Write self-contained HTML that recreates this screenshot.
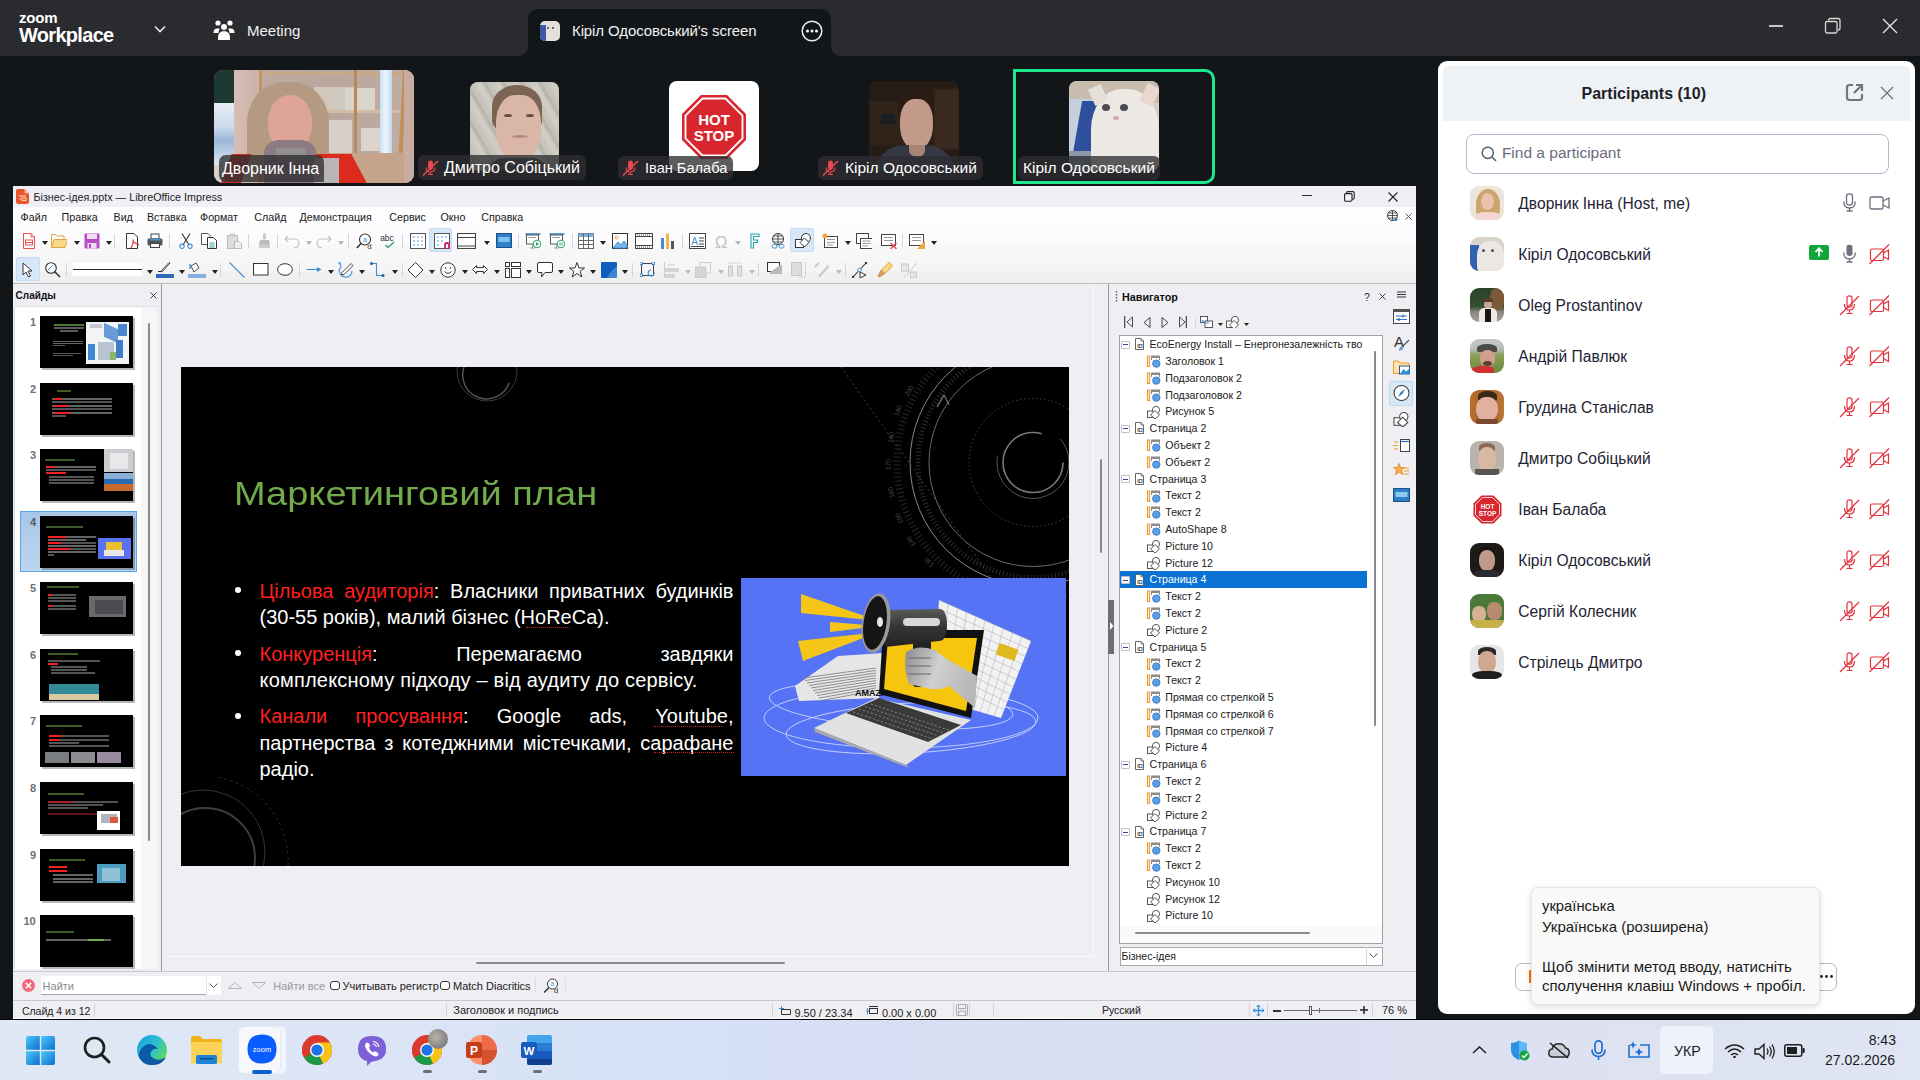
<!DOCTYPE html>
<html><head><meta charset="utf-8">
<style>
*{box-sizing:border-box;margin:0;padding:0}
html,body{width:1920px;height:1080px;overflow:hidden;background:#131619;font-family:"Liberation Sans",sans-serif;position:relative}
.a{position:absolute}
.t{position:absolute;white-space:nowrap;line-height:1}
/* zoom top bar */
#topbar{left:0;top:0;width:1920px;height:56px;background:#2a2b2e}
#tab{left:528px;top:9px;width:303px;height:47px;background:#131619;border-radius:10px 10px 0 0}
.lbl{position:absolute;height:25px;background:rgba(46,46,50,.78);border-radius:6px;color:#fff;font-size:16px;line-height:25px;white-space:nowrap}
/* LO */
#lo{left:13px;top:186px;width:1403px;height:833px;background:#f0eff3}
#pp{left:1438px;top:62px;width:476px;height:952px;background:#fff;border-radius:10px}
#taskbar{left:0;top:1020px;width:1920px;height:60px;background:linear-gradient(90deg,#dce5f4,#dde3f2 50%,#dae1f1)}

#lotitle{left:13px;top:186px;width:1403px;height:21px;background:#f0eff5}
#lomenu{left:13px;top:207px;width:1403px;height:77px;background:linear-gradient(180deg,#fefdff 0,#fbfbfd 45%,#f8f8f9 52%,#f5f5f6 82%,#f0f0f1 86%,#f0f0f1 100%)}

.jl{display:flex;justify-content:space-between;white-space:nowrap;line-height:1;color:#fff}
.sl{position:absolute;white-space:nowrap;line-height:1;color:#fff}
</style></head><body>
<div class="a" style="left:0;top:0;width:1920px;height:30px;background:#2a2b2e"></div>
<div id="tab" class="a"></div>
<div class="a" style="left:0;top:0;width:528px;height:56px;background:#2a2b2e;border-bottom-right-radius:10px"></div>
<div class="a" style="left:831px;top:0;width:1089px;height:56px;background:#2a2b2e;border-bottom-left-radius:10px"></div>
<div class="t" style="left:19px;top:10px;font-size:15px;font-weight:bold;color:#fff;letter-spacing:-0.2px">zoom</div>
<div class="t" style="left:19px;top:25px;font-size:20px;font-weight:bold;color:#fff;letter-spacing:-0.7px">Workplace</div>
<svg class="a" style="left:154px;top:25px" width="12" height="9" viewBox="0 0 12 9"><path d="M1 1.5 L6 6.5 L11 1.5" stroke="#e6e6e6" stroke-width="1.6" fill="none"/></svg>
<svg class="a" style="left:213px;top:19px" width="22" height="22" viewBox="0 0 22 22"><circle cx="5" cy="4" r="2.6" fill="#fff"/><circle cx="17" cy="4" r="2.6" fill="#fff"/><circle cx="11" cy="8" r="3" fill="#fff"/><path d="M0.5 14 Q0.5 9.5 4 9.5 L7 9.5 Q5.5 11 5.5 14 Z" fill="#fff"/><path d="M21.5 14 Q21.5 9.5 18 9.5 L15 9.5 Q16.5 11 16.5 14 Z" fill="#fff"/><path d="M5 21 Q4 12.5 11 12 Q18 12.5 17 21 Z" fill="#fff"/></svg>
<div class="t" style="left:247px;top:23px;font-size:15px;color:#f2f2f2">Meeting</div>
<div class="a" style="left:540px;top:21px;width:20px;height:20px;border-radius:5px;overflow:hidden;background:#e4e0dc"><div class="a" style="left:0;top:4px;width:6px;height:16px;background:#3a5aa8"></div><div class="a" style="left:7px;top:6px;width:2px;height:2px;background:#444;border-radius:50%"></div><div class="a" style="left:12px;top:6px;width:2px;height:2px;background:#444;border-radius:50%"></div></div>
<div class="t" style="left:572px;top:23px;font-size:15px;color:#f2f2f2;letter-spacing:-0.1px">Кіріл Одосовський's screen</div>
<svg class="a" style="left:801px;top:20px" width="22" height="22" viewBox="0 0 22 22"><circle cx="11" cy="11" r="9.8" stroke="#eee" stroke-width="1.5" fill="none"/><circle cx="6.5" cy="11" r="1.5" fill="#fff"/><circle cx="11" cy="11" r="1.5" fill="#fff"/><circle cx="15.5" cy="11" r="1.5" fill="#fff"/></svg>
<div class="a" style="left:1769px;top:25px;width:14px;height:1.5px;background:#c8c8c8"></div>
<svg class="a" style="left:1824px;top:17px" width="18" height="18" viewBox="0 0 18 18"><rect x="1.5" y="4.5" width="11.5" height="11.5" rx="1.5" stroke="#d8d8d8" stroke-width="1.3" fill="none"/><path d="M4.5 3.5 Q4.5 1.5 6.5 1.5 L14 1.5 Q16 1.5 16 3.5 L16 11 Q16 13 14 13" stroke="#d8d8d8" stroke-width="1.3" fill="none"/></svg>
<svg class="a" style="left:1882px;top:18px" width="16" height="16" viewBox="0 0 16 16"><path d="M1 1 L15 15 M15 1 L1 15" stroke="#e8e8e8" stroke-width="1.3"/></svg>

<!-- thumb1 -->
<div class="a" style="left:214px;top:70px;width:200px;height:113px;border-radius:9px;overflow:hidden;background:#c2aca2">
 <div class="a" style="left:0;top:0;width:22px;height:34px;background:#1c3a32"></div>
 <div class="a" style="left:0;top:33px;width:21px;height:62px;background:linear-gradient(180deg,#e8eef6,#c8d8ea 40%,#9ab8d8 60%,#dde6f0)"></div>
 <div class="a" style="left:0;top:95px;width:21px;height:18px;background:#d8d0cc"></div>
 <div class="a" style="left:20px;top:0;width:27px;height:113px;background:linear-gradient(90deg,#d6beb6,#cdb0a6)"></div>
 <div class="a" style="left:45px;top:0;width:3px;height:113px;background:#c49462"></div>
 <div class="a" style="left:48px;top:0;width:140px;height:83px;background:linear-gradient(90deg,#bfaaa2,#b9a69e 50%,#c0aca0)"></div>
 <div class="a" style="left:48px;top:2px;width:140px;height:3px;background:#c8a888"></div>
 <div class="a" style="left:48px;top:40px;width:140px;height:3px;background:#d4bca4"></div>
 <div class="a" style="left:100px;top:17px;width:40px;height:23px;background:#d0c8bc"></div>
 <div class="a" style="left:131px;top:18px;width:30px;height:22px;background:#d8d6cc"></div>
 <div class="a" style="left:112px;top:50px;width:26px;height:33px;background:#d8d0c8"></div>
 <div class="a" style="left:147px;top:58px;width:30px;height:23px;background:#dcd4cc"></div>
 <div class="a" style="left:166px;top:0;width:12px;height:83px;background:linear-gradient(90deg,#c8e0f4,#eef6fc,#c0d8f0)"></div>
 <div class="a" style="left:140px;top:0;width:3px;height:113px;background:#b8885a"></div>
 <div class="a" style="left:186px;top:0;width:4px;height:113px;background:#c0905c;transform:skewX(-3deg)"></div>
 <div class="a" style="left:48px;top:83px;width:152px;height:30px;background:#c6a48a"></div>
 <div class="a" style="left:190px;top:0;width:10px;height:113px;background:#c8aca0"></div>
 <div class="a" style="left:33px;top:12px;width:82px;height:90px;border-radius:45% 45% 20% 20%;background:#b49a80"></div>
 <div class="a" style="left:54px;top:25px;width:44px;height:56px;border-radius:48% 48% 45% 45%;background:#dea596"></div>
 <div class="a" style="left:50px;top:70px;width:52px;height:43px;border-radius:30% 30% 0 0;background:#8c7a84"></div>
 <div class="a" style="left:62px;top:78px;width:30px;height:10px;background:#909090"></div>
 <div class="a" style="left:112px;top:84px;width:36px;height:40px;background:#dc2a1c;transform:skewX(28deg)"></div>
 <div class="a" style="left:12px;top:84px;width:20px;height:30px;background:#c83020;transform:skewX(-20deg)"></div>
 <div class="a" style="left:100px;top:88px;width:25px;height:25px;background:#b8b4b8"></div>
</div>
<div class="lbl" style="left:219px;top:155px;width:105px;height:27px;border-radius:7px 7px 0 7px;line-height:27px;padding-left:3px">Дворник Інна</div>
<!-- thumb2 -->
<div class="a" style="left:470px;top:82px;width:89px;height:89px;border-radius:8px;overflow:hidden;background:#c4c0b8">
 <div class="a" style="left:0;top:0;width:89px;height:89px;background:repeating-linear-gradient(60deg,#d4d0c8 0 7px,#b0aca4 7px 10px,#c8c4bc 10px 16px);opacity:.8;filter:blur(1px)"></div>
 <div class="a" style="left:22px;top:3px;width:50px;height:45px;border-radius:48% 48% 20% 20%;background:#7c6452;filter:blur(.6px)"></div>
 <div class="a" style="left:26px;top:13px;width:45px;height:66px;border-radius:42% 42% 46% 46%;background:#d9b6a6;filter:blur(.5px)"></div>
 <div class="a" style="left:34px;top:32px;width:8px;height:3px;border-radius:50%;background:#6a4a40"></div>
 <div class="a" style="left:56px;top:32px;width:8px;height:3px;border-radius:50%;background:#6a4a40"></div>
 <div class="a" style="left:42px;top:53px;width:16px;height:3px;border-radius:50%;background:#b88a80"></div>
 <div class="a" style="left:18px;top:76px;width:60px;height:16px;border-radius:20px 20px 0 0;background:#44403e"></div>
</div>
<div class="lbl" style="left:418px;top:155px;width:168px;padding-left:26px">Дмитро Собіцький</div>
<svg class="a" style="left:422px;top:160px" width="17" height="16" viewBox="0 0 17 16"><path d="M6 2.5 Q6 0.5 8.5 0.5 Q11 0.5 11 2.5 L11 8 Q11 10 8.5 10 Q6 10 6 8 Z" fill="#e5484d"/><path d="M4 7.5 Q4 12 8.5 12 Q13 12 13 7.5 M8.5 12 L8.5 14.5 M6 14.5 L11 14.5" stroke="#e5484d" stroke-width="1.2" fill="none"/><path d="M1 15.5 L16 1" stroke="#e5484d" stroke-width="1.6"/></svg>
<!-- thumb3 -->
<div class="a" style="left:669px;top:81px;width:90px;height:90px;border-radius:8px;background:#fff"></div>
<svg class="a" style="left:681px;top:94px" width="66" height="66" viewBox="0 0 66 66"><polygon points="20,1 46,1 65,20 65,46 46,65 20,65 1,46 1,20" fill="#d8262f"/><polygon points="21.5,4.5 44.5,4.5 61.5,21.5 61.5,44.5 44.5,61.5 21.5,61.5 4.5,44.5 4.5,21.5" fill="none" stroke="#fff" stroke-width="1.8"/><text x="33" y="31" text-anchor="middle" font-family="Liberation Sans" font-weight="bold" font-size="15" fill="#fff">HOT</text><text x="33" y="47" text-anchor="middle" font-family="Liberation Sans" font-weight="bold" font-size="15" fill="#fff">STOP</text></svg>
<div class="lbl" style="left:618px;top:156px;width:115px;height:24px;line-height:24px;padding-left:27px;font-size:14.6px">Іван Балаба</div>
<svg class="a" style="left:622px;top:160px" width="17" height="16" viewBox="0 0 17 16"><path d="M6 2.5 Q6 0.5 8.5 0.5 Q11 0.5 11 2.5 L11 8 Q11 10 8.5 10 Q6 10 6 8 Z" fill="#e5484d"/><path d="M4 7.5 Q4 12 8.5 12 Q13 12 13 7.5 M8.5 12 L8.5 14.5 M6 14.5 L11 14.5" stroke="#e5484d" stroke-width="1.2" fill="none"/><path d="M1 15.5 L16 1" stroke="#e5484d" stroke-width="1.6"/></svg>
<!-- thumb4 -->
<div class="a" style="left:869px;top:81px;width:90px;height:90px;border-radius:8px;overflow:hidden;background:#261c16">
 <div class="a" style="left:0;top:20px;width:35px;height:45px;background:#30241a;filter:blur(1px)"></div>
 <div class="a" style="left:65px;top:8px;width:25px;height:60px;background:#3a2a20;filter:blur(1px)"></div>
 <div class="a" style="left:12px;top:33px;width:14px;height:10px;background:#1a1e20"></div>
 <div class="a" style="left:29px;top:8px;width:36px;height:28px;border-radius:50% 50% 10% 10%;background:#2a1c14"></div>
 <div class="a" style="left:31px;top:18px;width:33px;height:51px;border-radius:42% 42% 48% 48%;background:#c29a8a;filter:blur(.6px)"></div>
 <div class="a" style="left:5px;top:64px;width:82px;height:30px;border-radius:30px 30px 0 0;background:#343844"></div>
 <div class="a" style="left:40px;top:64px;width:16px;height:12px;border-radius:0 0 50% 50%;background:#a88476"></div>
</div>
<div class="lbl" style="left:818px;top:156px;width:165px;height:24px;line-height:24px;padding-left:27px;font-size:15.5px">Кіріл Одосовський</div>
<svg class="a" style="left:822px;top:160px" width="17" height="16" viewBox="0 0 17 16"><path d="M6 2.5 Q6 0.5 8.5 0.5 Q11 0.5 11 2.5 L11 8 Q11 10 8.5 10 Q6 10 6 8 Z" fill="#e5484d"/><path d="M4 7.5 Q4 12 8.5 12 Q13 12 13 7.5 M8.5 12 L8.5 14.5 M6 14.5 L11 14.5" stroke="#e5484d" stroke-width="1.2" fill="none"/><path d="M1 15.5 L16 1" stroke="#e5484d" stroke-width="1.6"/></svg>
<!-- thumb5 -->
<div class="a" style="left:1013px;top:69px;width:202px;height:115px;border:3px solid #1fe88c;border-radius:0 10px 10px 0"></div>
<div class="a" style="left:1069px;top:81px;width:90px;height:90px;border-radius:8px;overflow:hidden;background:#d8d0c6">
 <div class="a" style="left:0;top:0;width:90px;height:22px;background:#c8bcae"></div>
 <div class="a" style="left:0;top:18px;width:30px;height:72px;background:#c4d0dc"></div>
 <div class="a" style="left:8px;top:20px;width:22px;height:58px;background:#2d4f9c;transform:skewX(-10deg)"></div>
 <div class="a" style="left:0;top:70px;width:30px;height:20px;background:#8a9aaa"></div>
 <div class="a" style="left:22px;top:8px;width:68px;height:90px;border-radius:45% 45% 20% 20%;background:#ece8e4;filter:blur(.6px)"></div>
 <div class="a" style="left:22px;top:5px;width:14px;height:18px;background:#e6e0da;transform:rotate(-25deg)"></div>
 <div class="a" style="left:74px;top:4px;width:14px;height:20px;background:#e8d8d0;transform:rotate(25deg)"></div>
 <div class="a" style="left:33px;top:23px;width:8px;height:7px;border-radius:50%;background:#4a4a50"></div>
 <div class="a" style="left:51px;top:23px;width:8px;height:7px;border-radius:50%;background:#4a4a50"></div>
 <div class="a" style="left:44px;top:35px;width:6px;height:4px;border-radius:50%;background:#d8a8a8"></div>
</div>
<div class="lbl" style="left:1018px;top:156px;width:142px;height:24px;line-height:24px;padding-left:5px;font-size:15.5px">Кіріл Одосовський</div>
<div class="a" style="left:13px;top:186px;width:1403px;height:833px;background:#efeef2;"></div>
<div class="a" style="left:13px;top:1018px;width:1403px;height:1px;background:#fdfdfd;"></div>
<div id="lotitle" class="a"></div><div id="lomenu" class="a"></div>
<svg class="a" style="left:16px;top:189px;" width="13" height="15" viewBox="0 0 13 15"><path d="M1.5 0 L8.5 0 L13 4.5 L13 13 Q13 15 11 15 L2 15 Q0 15 0 13 L0 1.5 Q0 0 1.5 0 Z" fill="#e9542a"/><path d="M8.5 0 L8.5 4.5 L13 4.5" fill="#f8b8a0"/><path d="M3 7 L10 7 M3.5 10 L5 10" stroke="#fde7c0" stroke-width="1.2"/><rect x="6" y="9" width="4" height="2.5" fill="none" stroke="#fde7c0" stroke-width=".9"/></svg>
<div class="t" style="left:33.50px;top:191.70px;font-size:10.75px;color:#222;">Бізнес-ідея.pptx — LibreOffice Impress</div>
<div class="a" style="left:1302px;top:195px;width:10px;height:1px;background:#333;"></div>
<svg class="a" style="left:1344px;top:191px;" width="11" height="11" viewBox="0 0 11 11"><rect x="0.6" y="2.6" width="7.4" height="7.6" rx="1.2" fill="none" stroke="#222" stroke-width="1.1"/><path d="M2.6 2.6 L2.6 1.8 Q2.6 0.6 3.8 0.6 L9 0.6 Q10.2 0.6 10.2 1.8 L10.2 7 Q10.2 8.2 9 8.2 L8 8.2" fill="none" stroke="#222" stroke-width="1.1"/></svg>
<svg class="a" style="left:1388px;top:192px;" width="10" height="10" viewBox="0 0 10 10"><path d="M0.5 0.5 L9.5 9.5 M9.5 0.5 L0.5 9.5" stroke="#222" stroke-width="1.1"/></svg>
<div class="t" style="left:20.60px;top:211.94px;font-size:10.7px;color:#1a1a1a;">Файл</div>
<div class="t" style="left:61.60px;top:211.94px;font-size:10.7px;color:#1a1a1a;">Правка</div>
<div class="t" style="left:113.50px;top:211.94px;font-size:10.7px;color:#1a1a1a;">Вид</div>
<div class="t" style="left:146.90px;top:211.94px;font-size:10.7px;color:#1a1a1a;">Вставка</div>
<div class="t" style="left:200.00px;top:211.94px;font-size:10.7px;color:#1a1a1a;">Формат</div>
<div class="t" style="left:254.30px;top:211.94px;font-size:10.7px;color:#1a1a1a;">Слайд</div>
<div class="t" style="left:299.50px;top:211.94px;font-size:10.7px;color:#1a1a1a;">Демонстрация</div>
<div class="t" style="left:389.30px;top:211.94px;font-size:10.7px;color:#1a1a1a;">Сервис</div>
<div class="t" style="left:440.50px;top:211.94px;font-size:10.7px;color:#1a1a1a;">Окно</div>
<div class="t" style="left:481.30px;top:211.94px;font-size:10.7px;color:#1a1a1a;">Справка</div>
<svg class="a" style="left:1387px;top:210px;" width="12" height="12" viewBox="0 0 12 12"><circle cx="5.5" cy="5.5" r="5" fill="none" stroke="#333"/><path d="M0.5 5.5 L10.5 5.5 M5.5 0.5 L5.5 10.5 M1.5 3 L9.5 3 M1.5 8 L9.5 8" stroke="#333" stroke-width=".8"/><path d="M9 7 L9 11 M7.5 9.5 L9 11 L10.5 9.5" stroke="#2d8fd6"/></svg>
<svg class="a" style="left:1405px;top:213px;" width="7" height="7" viewBox="0 0 7 7"><path d="M0.5 0.5 L6.5 6.5 M6.5 0.5 L0.5 6.5" stroke="#555"/></svg>
<div class="a" style="left:429px;top:228px;width:23px;height:24px;background:#d6e7f8;border:1px solid #c7dcf2;border-radius:2px"></div>
<div class="a" style="left:790px;top:228px;width:24px;height:24px;background:#d6e7f8;border:1px solid #c7dcf2;border-radius:2px"></div>
<svg class="a" style="left:21px;top:233px;" width="16" height="16" viewBox="0 0 16 16"><path d="M2.5 0.5 L10 0.5 L13.5 4 L13.5 15.5 L2.5 15.5 Z" fill="#fff" stroke="#e8504a"/><path d="M10 0.5 L10 4 L13.5 4" fill="none" stroke="#e8504a"/><rect x="4.5" y="7" width="7" height="5" fill="none" stroke="#e8504a"/><path d="M4 9.5 L12 9.5" stroke="#e8504a"/></svg>
<svg class="a" style="left:51px;top:233px;" width="16" height="16" viewBox="0 0 16 16"><path d="M0.5 3 L0.5 14.5 L14 14.5 L16.5 6.5 L3 6.5 L0.5 14" fill="#f8d889" stroke="#e3a53a"/><path d="M0.5 3 L0.5 1.5 L5 1.5 L6.5 3 L13 3 L13 6.5" fill="none" stroke="#e3a53a"/></svg>
<svg class="a" style="left:84px;top:233px;" width="16" height="16" viewBox="0 0 16 16"><rect x="0.5" y="0.5" width="15" height="15" rx="1" fill="#b84fc0"/><rect x="3" y="1" width="10" height="5" fill="#f4dcf6"/><rect x="3.5" y="10" width="9" height="5.5" fill="#f4dcf6"/><rect x="5" y="11" width="2" height="4" fill="#b84fc0"/></svg>
<svg class="a" style="left:125px;top:233px;" width="16" height="16" viewBox="0 0 16 16"><path d="M1.5 0.5 L9 0.5 L12.5 4 L12.5 15.5 L1.5 15.5 Z" fill="#fff" stroke="#333"/><path d="M6 15 Q9 9 8 7 Q7 9 14 12" fill="none" stroke="#e0393e" stroke-width="1.2"/></svg>
<svg class="a" style="left:147px;top:233px;" width="16" height="16" viewBox="0 0 16 16"><rect x="4" y="1" width="8" height="5" fill="#fff" stroke="#444"/><rect x="0.5" y="5.5" width="15" height="7" rx="1.5" fill="#555"/><rect x="3" y="6" width="10" height="1.5" fill="#3d9ad6"/><rect x="3.5" y="10.5" width="9" height="4" fill="#fff" stroke="#444"/></svg>
<svg class="a" style="left:178px;top:233px;" width="16" height="16" viewBox="0 0 16 16"><path d="M4 0.5 L11 12 M12 0.5 L5 12" stroke="#333" stroke-width="1.1"/><circle cx="4" cy="13.3" r="2.2" fill="none" stroke="#3d8fd6" stroke-width="1.1"/><circle cx="12" cy="13.3" r="2.2" fill="none" stroke="#3d8fd6" stroke-width="1.1"/></svg>
<svg class="a" style="left:201px;top:233px;" width="16" height="16" viewBox="0 0 16 16"><path d="M0.5 0.5 L7 0.5 L9 2.5 L9 11.5 L0.5 11.5 Z" fill="#fff" stroke="#555"/><path d="M6.5 4.5 L12.5 4.5 L15.5 7.5 L15.5 15.5 L6.5 15.5 Z" fill="#fff" stroke="#333"/><path d="M8.5 10 L13.5 10 M8.5 12 L13.5 12 M8.5 14 L13.5 14" stroke="#3aa39a"/></svg>
<svg class="a" style="left:227px;top:233px;" width="16" height="16" viewBox="0 0 16 16"><rect x="0.5" y="2.5" width="10" height="13" fill="#ddd" stroke="#bbb"/><rect x="3" y="0.5" width="5" height="3" fill="#ccc"/><path d="M7.5 8.5 L12 8.5 L14.5 11 L14.5 15.5 L7.5 15.5 Z" fill="#eee" stroke="#bbb"/></svg>
<svg class="a" style="left:257px;top:233px;" width="16" height="16" viewBox="0 0 16 16"><rect x="6" y="0.5" width="3" height="6" fill="#ccc"/><path d="M3 7 L12 7 L13 11 L2 11 Z" fill="#bbb"/><rect x="2" y="11" width="11" height="4" fill="#ccc"/></svg>
<svg class="a" style="left:284px;top:233px;" width="16" height="16" viewBox="0 0 16 16"><path d="M4 3 L1 6 L4 9 M1.5 6 L10 6 Q15 6 15 10.5 Q15 14 10 15" fill="none" stroke="#c2c2c2" stroke-width="1.1"/></svg>
<svg class="a" style="left:316px;top:233px;" width="16" height="16" viewBox="0 0 16 16"><path d="M12 3 L15 6 L12 9 M14.5 6 L6 6 Q1 6 1 10.5 Q1 14 6 15" fill="none" stroke="#c2c2c2" stroke-width="1.1"/></svg>
<svg class="a" style="left:356px;top:233px;" width="16" height="16" viewBox="0 0 16 16"><circle cx="9" cy="6.5" r="5.5" fill="#fff" stroke="#333" stroke-width="1.1"/><path d="M5 10.5 L0.8 15" stroke="#333" stroke-width="1.6"/><text x="9" y="9" font-size="7" text-anchor="middle" fill="#3d8fd6" font-family="Liberation Sans">a</text><text x="13.5" y="15.5" font-size="8" text-anchor="middle" fill="#333" font-family="Liberation Sans">d</text></svg>
<svg class="a" style="left:379px;top:233px;" width="16" height="16" viewBox="0 0 16 16"><text x="8" y="8" font-size="8.5" text-anchor="middle" fill="#333" font-family="Liberation Sans">abc</text><path d="M6.5 12 L9 14.5 L15 9" fill="none" stroke="#29a36a" stroke-width="1.3"/></svg>
<svg class="a" style="left:410px;top:233px;" width="16" height="16" viewBox="0 0 16 16"><rect x="0.5" y="0.5" width="15" height="15" fill="#fff" stroke="#555"/><g fill="#3d8fd6"><circle cx="4" cy="4" r=".8"/><circle cx="8" cy="4" r=".8"/><circle cx="12" cy="4" r=".8"/><circle cx="4" cy="8" r=".8"/><circle cx="8" cy="8" r=".8"/><circle cx="12" cy="8" r=".8"/><circle cx="4" cy="12" r=".8"/><circle cx="8" cy="12" r=".8"/><circle cx="12" cy="12" r=".8"/></g></svg>
<svg class="a" style="left:434px;top:233px;" width="16" height="16" viewBox="0 0 16 16"><rect x="0.5" y="0.5" width="15" height="15" fill="#fff" stroke="#555"/><g fill="#3d8fd6"><circle cx="4" cy="4" r=".8"/><circle cx="8" cy="4" r=".8"/><circle cx="12" cy="4" r=".8"/><circle cx="4" cy="8" r=".8"/><circle cx="8" cy="8" r=".8"/><circle cx="4" cy="12" r=".8"/></g><path d="M11 16 L11 11 Q13 9 15 11 L15 16" fill="none" stroke="#d21d6a" stroke-width="1.8"/></svg>
<svg class="a" style="left:496px;top:233px;" width="16" height="16" viewBox="0 0 16 16"><rect x="0.5" y="0.5" width="15" height="14" fill="#2f7fc8" stroke="#1b4f8a"/><rect x="2.5" y="4" width="11" height="5" fill="#7fc4f0"/></svg>
<svg class="a" style="left:525px;top:233px;" width="16" height="16" viewBox="0 0 16 16"><path d="M0.5 1 L15.5 1" stroke="#2e80c6" stroke-width="1.5"/><rect x="1.5" y="2" width="12" height="9" fill="#fff" stroke="#555"/><path d="M3.5 4.5 L11 4.5" stroke="#999"/><path d="M7.5 11 L7.5 15 M5 15 L10 15" stroke="#999"/><circle cx="12" cy="11" r="3.8" fill="#fff" stroke="#2aa36a"/><path d="M11 9 L14 11 L11 13 Z" fill="#2aa36a"/></svg>
<svg class="a" style="left:549px;top:233px;" width="16" height="16" viewBox="0 0 16 16"><path d="M0.5 1 L15.5 1" stroke="#2e80c6" stroke-width="1.5"/><rect x="1.5" y="2" width="12" height="9" fill="#fff" stroke="#555"/><path d="M3.5 4.5 L11 4.5" stroke="#999"/><path d="M7.5 11 L7.5 15 M5 15 L10 15" stroke="#999"/><circle cx="12" cy="11" r="3.8" fill="#fff" stroke="#2aa36a"/><path d="M11 9.5 L11 12.5 M13 9.5 L13 12.5" stroke="#2aa36a"/></svg>
<svg class="a" style="left:578px;top:233px;" width="16" height="16" viewBox="0 0 16 16"><rect x="0.5" y="0.5" width="15" height="15" fill="#fff" stroke="#666"/><rect x="0.5" y="0.5" width="15" height="3.5" fill="#7ab0de"/><path d="M0.5 7.5 L15.5 7.5 M0.5 11.5 L15.5 11.5 M5.5 0.5 L5.5 15.5 M10.5 0.5 L10.5 15.5" stroke="#666"/></svg>
<svg class="a" style="left:612px;top:233px;" width="16" height="16" viewBox="0 0 16 16"><rect x="0.5" y="0.5" width="15" height="15" fill="#fff" stroke="#333"/><circle cx="4.5" cy="4.5" r="1.5" fill="none" stroke="#f29a38"/><path d="M1 15 L6 9 L9 12 L12 8 L15 12 L15 15 Z" fill="#7ab6e8" stroke="#3d8fd6"/></svg>
<svg class="a" style="left:660px;top:233px;" width="16" height="16" viewBox="0 0 16 16"><rect x="1" y="5" width="3" height="11" fill="#3d8fd6"/><rect x="6" y="0.5" width="3" height="15.5" fill="#f6b54c"/><rect x="11" y="8" width="3" height="8" fill="#555"/></svg>
<svg class="a" style="left:713px;top:233px;" width="16" height="16" viewBox="0 0 16 16"><text x="8" y="14.5" font-size="17" text-anchor="middle" fill="#c2c2c2" font-family="Liberation Sans">&#937;</text></svg>
<svg class="a" style="left:747px;top:233px;" width="16" height="16" viewBox="0 0 16 16"><path d="M4 1 L12 1 L12 3.5 L6.5 3.5 L6.5 7 L10.5 7 L10.5 9.5 L6.5 9.5 L6.5 15 L4 15 Z" fill="#fff" stroke="#27a0b0" stroke-width="1.1"/></svg>
<svg class="a" style="left:770px;top:233px;" width="16" height="16" viewBox="0 0 16 16"><circle cx="8" cy="6" r="5.5" fill="#fff" stroke="#333"/><path d="M2.5 6 L13.5 6 M8 0.5 L8 11.5 M3.5 3 L12.5 3 M3.5 9 L12.5 9" stroke="#333" stroke-width=".8"/><rect x="2" y="11.5" width="5" height="3.5" rx="1.5" fill="none" stroke="#3d8fd6"/><rect x="9" y="11.5" width="5" height="3.5" rx="1.5" fill="none" stroke="#3d8fd6"/></svg>
<svg class="a" style="left:795px;top:233px;" width="16" height="16" viewBox="0 0 16 16"><rect x="0.5" y="6.5" width="8" height="8" fill="#fff" stroke="#333"/><circle cx="11" cy="5" r="4.5" fill="#fff" stroke="#333"/><path d="M9.5 5 L14 9.5 L9.5 14 L5 9.5 Z" fill="#fff" stroke="#333"/></svg>
<svg class="a" style="left:822px;top:233px;" width="16" height="16" viewBox="0 0 16 16"><rect x="2.5" y="3.5" width="13" height="11" fill="#fff" stroke="#444"/><path d="M5 6.5 L13 6.5 M5 9.5 L13 9.5 M5 12 L11 12" stroke="#999"/><circle cx="3" cy="3" r="2.5" fill="#f6a33a"/></svg>
<svg class="a" style="left:856px;top:233px;" width="16" height="16" viewBox="0 0 16 16"><rect x="0.5" y="0.5" width="12" height="10" fill="#fff" stroke="#444"/><rect x="4.5" y="5.5" width="12" height="10" fill="#fff" stroke="#444"/><path d="M6.5 8 L14.5 8 M6.5 10.5 L14.5 10.5 M6.5 13 L12 13" stroke="#999"/></svg>
<svg class="a" style="left:881px;top:233px;" width="16" height="16" viewBox="0 0 16 16"><rect x="0.5" y="1.5" width="14" height="11" fill="#fff" stroke="#444"/><path d="M3 4.5 L12 4.5 M3 7.5 L12 7.5" stroke="#999"/><path d="M9.5 10 L15.5 16 M15.5 10 L9.5 16" stroke="#e23b4a" stroke-width="1.2"/></svg>
<svg class="a" style="left:909px;top:233px;" width="16" height="16" viewBox="0 0 16 16"><rect x="0.5" y="1.5" width="14" height="11" fill="#fff" stroke="#444"/><path d="M3 4.5 L12 4.5 M3 7.5 L12 7.5" stroke="#999"/><path d="M16 8 L16 16 L8 16 Z" fill="#f6a33a"/></svg>
<svg class="a" style="left:457px;top:233px;" width="19" height="16" viewBox="0 0 19 16"><rect x="0.5" y="0.5" width="18" height="15" fill="#fff" stroke="#444" stroke-width="1.1"/><path d="M0.5 4.5 L18.5 4.5 M0.5 13 L18.5 13" stroke="#444"/></svg>
<svg class="a" style="left:635px;top:233px;" width="18" height="16" viewBox="0 0 18 16"><rect x="0.5" y="0.5" width="17" height="15" fill="#fff" stroke="#444"/><path d="M0.5 3.5 L17.5 3.5 M0.5 12.5 L17.5 12.5" stroke="#444"/><path d="M2 2 L16 2 M2 14 L16 14" stroke="#444" stroke-dasharray="1 1"/></svg>
<svg class="a" style="left:689px;top:233px;" width="17" height="16" viewBox="0 0 17 16"><rect x="0.5" y="0.5" width="16" height="15" fill="#fff" stroke="#444"/><text x="5.5" y="12" font-size="10" text-anchor="middle" fill="#3d8fd6" font-family="Liberation Sans">A</text><path d="M10 5 L15 5 M10 8 L15 8 M10 11 L15 11 M2 13.5 L15 13.5" stroke="#444"/></svg>
<svg class="a" style="left:42px;top:241px;" width="6" height="4" viewBox="0 0 6 4"><path d="M0 0 L6 0 L3 4 Z" fill="#222"/></svg>
<svg class="a" style="left:74px;top:241px;" width="6" height="4" viewBox="0 0 6 4"><path d="M0 0 L6 0 L3 4 Z" fill="#222"/></svg>
<svg class="a" style="left:106px;top:241px;" width="6" height="4" viewBox="0 0 6 4"><path d="M0 0 L6 0 L3 4 Z" fill="#222"/></svg>
<svg class="a" style="left:484px;top:241px;" width="6" height="4" viewBox="0 0 6 4"><path d="M0 0 L6 0 L3 4 Z" fill="#222"/></svg>
<svg class="a" style="left:600px;top:241px;" width="6" height="4" viewBox="0 0 6 4"><path d="M0 0 L6 0 L3 4 Z" fill="#222"/></svg>
<svg class="a" style="left:845px;top:241px;" width="6" height="4" viewBox="0 0 6 4"><path d="M0 0 L6 0 L3 4 Z" fill="#222"/></svg>
<svg class="a" style="left:931px;top:241px;" width="6" height="4" viewBox="0 0 6 4"><path d="M0 0 L6 0 L3 4 Z" fill="#222"/></svg>
<svg class="a" style="left:306px;top:241px;" width="6" height="4" viewBox="0 0 6 4"><path d="M0 0 L6 0 L3 4 Z" fill="#b8b8b8"/></svg>
<svg class="a" style="left:338px;top:241px;" width="6" height="4" viewBox="0 0 6 4"><path d="M0 0 L6 0 L3 4 Z" fill="#b8b8b8"/></svg>
<svg class="a" style="left:735px;top:241px;" width="6" height="4" viewBox="0 0 6 4"><path d="M0 0 L6 0 L3 4 Z" fill="#b8b8b8"/></svg>
<div class="a" style="left:114px;top:234px;width:1px;height:14px;background:#d6d6da;"></div>
<div class="a" style="left:169px;top:234px;width:1px;height:14px;background:#d6d6da;"></div>
<div class="a" style="left:248px;top:234px;width:1px;height:14px;background:#d6d6da;"></div>
<div class="a" style="left:277px;top:234px;width:1px;height:14px;background:#d6d6da;"></div>
<div class="a" style="left:348px;top:234px;width:1px;height:14px;background:#d6d6da;"></div>
<div class="a" style="left:402px;top:234px;width:1px;height:14px;background:#d6d6da;"></div>
<div class="a" style="left:518px;top:234px;width:1px;height:14px;background:#d6d6da;"></div>
<div class="a" style="left:572px;top:234px;width:1px;height:14px;background:#d6d6da;"></div>
<div class="a" style="left:682px;top:234px;width:1px;height:14px;background:#d6d6da;"></div>
<div class="a" style="left:902px;top:234px;width:1px;height:14px;background:#d6d6da;"></div>
<div class="a" style="left:16px;top:257px;width:24px;height:24px;background:#d6e7f8;border:1px solid #c7dcf2;border-radius:2px"></div>
<svg class="a" style="left:21px;top:262px;" width="16" height="16" viewBox="0 0 16 16"><path d="M2 1 L2 13 L5 10 L7.5 15 L9.5 14 L7 9 L11 9 Z" fill="#fff" stroke="#333"/></svg>
<svg class="a" style="left:45px;top:262px;" width="16" height="16" viewBox="0 0 16 16"><circle cx="6" cy="6" r="5.3" fill="#fff" stroke="#333" stroke-width="1.1"/><path d="M9.5 9.5 L15 15" stroke="#333" stroke-width="1.6"/><path d="M3 8 L8 3" stroke="#3d8fd6"/></svg>
<svg class="a" style="left:156px;top:262px;" width="18" height="16" viewBox="0 0 18 16"><path d="M14 1 L7 9 L5 10 L6 8 L13 0.5 Z" fill="#fff" stroke="#333" stroke-width=".9"/><path d="M2 9.5 L5 9.5" stroke="#333"/><rect x="0" y="12" width="18" height="4" fill="#2f6ab8"/></svg>
<svg class="a" style="left:188px;top:262px;" width="18" height="16" viewBox="0 0 18 16"><path d="M3 4 L8 1 L11 6 L6 10 Z" fill="#fff" stroke="#333" stroke-width=".9"/><path d="M2 2 L2 7" stroke="#3d8fd6" stroke-width="1.3"/><rect x="0" y="12" width="18" height="4" fill="#86aee0"/></svg>
<svg class="a" style="left:229px;top:262px;" width="16" height="16" viewBox="0 0 16 16"><path d="M0.5 0.5 L15.5 15.5" stroke="#3d8fd6" stroke-width="1.1"/></svg>
<svg class="a" style="left:253px;top:262px;" width="16" height="16" viewBox="0 0 16 16"><rect x="0.5" y="1.5" width="14.5" height="11.5" fill="#fff" stroke="#333"/></svg>
<svg class="a" style="left:277px;top:262px;" width="16" height="16" viewBox="0 0 16 16"><ellipse cx="8" cy="7.5" rx="7.4" ry="5.8" fill="#fff" stroke="#333"/></svg>
<svg class="a" style="left:306px;top:262px;" width="16" height="16" viewBox="0 0 16 16"><path d="M0.5 7.5 L13 7.5" stroke="#3d8fd6" stroke-width="1.1"/><path d="M11 5 L15.5 7.5 L11 10 Z" fill="#3d8fd6"/></svg>
<svg class="a" style="left:338px;top:262px;" width="16" height="16" viewBox="0 0 16 16"><path d="M3 1 L1 1 Q5 4 1 8 Q2 16 10 15 Q14 13 14 9" fill="none" stroke="#3d8fd6" stroke-width="1.1"/><path d="M13 1.5 L15 3.5 L6 12.5 L3.5 13 L4 10.5 Z" fill="#fff" stroke="#333" stroke-width=".9"/></svg>
<svg class="a" style="left:370px;top:262px;" width="16" height="16" viewBox="0 0 16 16"><path d="M1.5 1.5 L6.5 1.5 L6.5 13.5 L12.5 13.5" fill="none" stroke="#3d8fd6" stroke-width="1.1"/><circle cx="1.5" cy="1.5" r="1.5" fill="#1b5fa8"/><circle cx="13" cy="13.5" r="1.5" fill="#1b5fa8"/></svg>
<svg class="a" style="left:408px;top:262px;" width="16" height="16" viewBox="0 0 16 16"><path d="M7.5 0.5 L15 8 L7.5 15.5 L0 8 Z" fill="#fff" stroke="#333"/></svg>
<svg class="a" style="left:440px;top:262px;" width="16" height="16" viewBox="0 0 16 16"><circle cx="8" cy="8" r="7.2" fill="#fff" stroke="#333"/><circle cx="5.5" cy="6" r=".8" fill="#333"/><circle cx="10.5" cy="6" r=".8" fill="#333"/><path d="M4.5 9.5 Q8 13 11.5 9.5" fill="none" stroke="#333"/></svg>
<svg class="a" style="left:472px;top:262px;" width="16" height="16" viewBox="0 0 16 16"><path d="M0.5 7.5 L4.5 3.5 L4.5 5.5 L11.5 5.5 L11.5 3.5 L15.5 7.5 L11.5 11.5 L11.5 9.5 L4.5 9.5 L4.5 11.5 Z" fill="#fff" stroke="#333"/></svg>
<svg class="a" style="left:505px;top:262px;" width="16" height="16" viewBox="0 0 16 16"><rect x="0.5" y="0.5" width="4" height="4" fill="#fff" stroke="#333"/><rect x="6.5" y="0.5" width="9" height="4" fill="#fff" stroke="#333"/><rect x="0.5" y="6.5" width="4" height="9" fill="#fff" stroke="#333"/><rect x="6.5" y="6.5" width="9" height="9" fill="#fff" stroke="#333"/></svg>
<svg class="a" style="left:537px;top:262px;" width="16" height="16" viewBox="0 0 16 16"><path d="M2 0.5 L14 0.5 Q15.5 0.5 15.5 2 L15.5 9 Q15.5 10.5 14 10.5 L8 10.5 L4.5 15 L5 10.5 L2 10.5 Q0.5 10.5 0.5 9 L0.5 2 Q0.5 0.5 2 0.5 Z" fill="#fff" stroke="#333"/></svg>
<svg class="a" style="left:569px;top:262px;" width="16" height="16" viewBox="0 0 16 16"><path d="M8 0.5 L10 6 L15.5 6 L11 9.5 L13 15 L8 11.5 L3 15 L5 9.5 L0.5 6 L6 6 Z" fill="#fff" stroke="#333"/></svg>
<svg class="a" style="left:601px;top:262px;" width="16" height="16" viewBox="0 0 16 16"><rect x="0" y="0" width="16" height="16" rx="1" fill="#0f5fbf"/><path d="M16 4 Q10 8 6 16 L16 16 Z" fill="#5e9be0" opacity=".6"/></svg>
<svg class="a" style="left:640px;top:262px;" width="16" height="16" viewBox="0 0 16 16"><rect x="1.5" y="1.5" width="12" height="12" fill="none" stroke="#444"/><g fill="#fff" stroke="#3d8fd6"><rect x="0" y="0" width="2.5" height="2.5"/><rect x="12" y="0" width="2.5" height="2.5"/><rect x="0" y="12" width="2.5" height="2.5"/></g><path d="M14 10 A3 3 0 1 1 11 8" fill="none" stroke="#3d8fd6" stroke-width="1.1"/></svg>
<svg class="a" style="left:664px;top:262px;" width="16" height="16" viewBox="0 0 16 16"><path d="M0.5 0 L0.5 16" stroke="#ccc"/><rect x="1" y="6" width="14" height="4" fill="#d4d4d4"/><rect x="1" y="12" width="10" height="4" fill="#d4d4d4"/><path d="M3 3 L11 3" stroke="#ccc"/></svg>
<svg class="a" style="left:695px;top:262px;" width="16" height="16" viewBox="0 0 16 16"><rect x="5" y="0.5" width="10.5" height="10.5" fill="none" stroke="#ccc"/><rect x="0.5" y="5" width="10.5" height="10.5" fill="#d4d4d4" stroke="#ccc"/></svg>
<svg class="a" style="left:727px;top:262px;" width="16" height="16" viewBox="0 0 16 16"><rect x="1.5" y="4" width="4" height="10" fill="#e0e0e0" stroke="#c8c8c8"/><rect x="10.5" y="4" width="4" height="10" fill="#e0e0e0" stroke="#c8c8c8"/><path d="M1 1 L15 1" stroke="#c8c8c8" stroke-dasharray="1.5 1"/></svg>
<svg class="a" style="left:767px;top:262px;" width="16" height="16" viewBox="0 0 16 16"><rect x="0.5" y="0.5" width="12" height="9" fill="#fff" stroke="#333"/><path d="M13 3 L15 3 L15 12 L3 12 L3 10" fill="#bbb"/></svg>
<svg class="a" style="left:791px;top:262px;" width="16" height="16" viewBox="0 0 16 16"><rect x="0.5" y="0.5" width="10" height="13" fill="#ddd" stroke="#c8c8c8"/><path d="M14.5 0 L14.5 15 M8 15.5 L15 15.5" stroke="#c8c8c8" stroke-dasharray="1.5 1"/></svg>
<svg class="a" style="left:814px;top:262px;" width="16" height="16" viewBox="0 0 16 16"><path d="M4 14 L14 3 L15.5 4.5 L5.5 15.5 Z" fill="#c8c8c8"/><path d="M1 5 L5 1" stroke="#c8c8c8" stroke-width="2"/></svg>
<svg class="a" style="left:852px;top:262px;" width="16" height="16" viewBox="0 0 16 16"><path d="M1 15 L14 1" stroke="#333" stroke-width="1.1"/><circle cx="1" cy="15" r="1.2" fill="#333"/><circle cx="14" cy="1" r="1.2" fill="#333"/><circle cx="7.5" cy="8" r="1.8" fill="#fff" stroke="#3d8fd6"/><path d="M8 10 L8 16 L14 13 Z" fill="#fff" stroke="#333"/></svg>
<svg class="a" style="left:877px;top:262px;" width="16" height="16" viewBox="0 0 16 16"><path d="M12 0.5 L15.5 4 L8 11.5 L4.5 8 Z" fill="#f8d68a" stroke="#e59b32"/><path d="M4.5 8 L1 14 L2 15 L8 11.5" fill="#d8a060" stroke="#c8883a"/></svg>
<svg class="a" style="left:901px;top:262px;" width="16" height="16" viewBox="0 0 16 16"><rect x="0.5" y="2" width="7" height="7" fill="#e6e6e6" stroke="#c8c8c8"/><path d="M2.5 16 L16 1" stroke="#c8c8c8"/><rect x="9.5" y="10" width="6" height="6" fill="#e6e6e6" stroke="#c8c8c8"/></svg>
<div class="a" style="left:72px;top:263px;width:70px;height:13px;background:#fff;"></div>
<div class="a" style="left:73px;top:269px;width:69px;height:1px;background:#2a2a2a;"></div>
<svg class="a" style="left:147px;top:270px;" width="6" height="4" viewBox="0 0 6 4"><path d="M0 0 L6 0 L3 4 Z" fill="#222"/></svg>
<svg class="a" style="left:179px;top:270px;" width="6" height="4" viewBox="0 0 6 4"><path d="M0 0 L6 0 L3 4 Z" fill="#222"/></svg>
<svg class="a" style="left:212px;top:270px;" width="6" height="4" viewBox="0 0 6 4"><path d="M0 0 L6 0 L3 4 Z" fill="#222"/></svg>
<svg class="a" style="left:328px;top:270px;" width="6" height="4" viewBox="0 0 6 4"><path d="M0 0 L6 0 L3 4 Z" fill="#222"/></svg>
<svg class="a" style="left:359px;top:270px;" width="6" height="4" viewBox="0 0 6 4"><path d="M0 0 L6 0 L3 4 Z" fill="#222"/></svg>
<svg class="a" style="left:392px;top:270px;" width="6" height="4" viewBox="0 0 6 4"><path d="M0 0 L6 0 L3 4 Z" fill="#222"/></svg>
<svg class="a" style="left:429px;top:270px;" width="6" height="4" viewBox="0 0 6 4"><path d="M0 0 L6 0 L3 4 Z" fill="#222"/></svg>
<svg class="a" style="left:462px;top:270px;" width="6" height="4" viewBox="0 0 6 4"><path d="M0 0 L6 0 L3 4 Z" fill="#222"/></svg>
<svg class="a" style="left:494px;top:270px;" width="6" height="4" viewBox="0 0 6 4"><path d="M0 0 L6 0 L3 4 Z" fill="#222"/></svg>
<svg class="a" style="left:526px;top:270px;" width="6" height="4" viewBox="0 0 6 4"><path d="M0 0 L6 0 L3 4 Z" fill="#222"/></svg>
<svg class="a" style="left:558px;top:270px;" width="6" height="4" viewBox="0 0 6 4"><path d="M0 0 L6 0 L3 4 Z" fill="#222"/></svg>
<svg class="a" style="left:590px;top:270px;" width="6" height="4" viewBox="0 0 6 4"><path d="M0 0 L6 0 L3 4 Z" fill="#222"/></svg>
<svg class="a" style="left:622px;top:270px;" width="6" height="4" viewBox="0 0 6 4"><path d="M0 0 L6 0 L3 4 Z" fill="#222"/></svg>
<svg class="a" style="left:685px;top:270px;" width="6" height="4" viewBox="0 0 6 4"><path d="M0 0 L6 0 L3 4 Z" fill="#b8b8b8"/></svg>
<svg class="a" style="left:718px;top:270px;" width="6" height="4" viewBox="0 0 6 4"><path d="M0 0 L6 0 L3 4 Z" fill="#b8b8b8"/></svg>
<svg class="a" style="left:749px;top:270px;" width="6" height="4" viewBox="0 0 6 4"><path d="M0 0 L6 0 L3 4 Z" fill="#b8b8b8"/></svg>
<svg class="a" style="left:836px;top:270px;" width="6" height="4" viewBox="0 0 6 4"><path d="M0 0 L6 0 L3 4 Z" fill="#b8b8b8"/></svg>
<div class="a" style="left:66px;top:263px;width:1px;height:14px;background:#d6d6da;"></div>
<div class="a" style="left:220px;top:263px;width:1px;height:14px;background:#d6d6da;"></div>
<div class="a" style="left:299px;top:263px;width:1px;height:14px;background:#d6d6da;"></div>
<div class="a" style="left:402px;top:263px;width:1px;height:14px;background:#d6d6da;"></div>
<div class="a" style="left:632px;top:263px;width:1px;height:14px;background:#d6d6da;"></div>
<div class="a" style="left:758px;top:263px;width:1px;height:14px;background:#d6d6da;"></div>
<div class="a" style="left:845px;top:263px;width:1px;height:14px;background:#d6d6da;"></div>
<div class="a" style="left:13px;top:283px;width:1403px;height:1px;background:#bcbbc0;"></div><div class="t" style="left:15.60px;top:291.24px;font-size:10px;color:#111;font-weight:bold;">Слайды</div>
<svg class="a" style="left:150px;top:292px;" width="7" height="7" viewBox="0 0 7 7"><path d="M0.5 0.5 L6.5 6.5 M6.5 0.5 L0.5 6.5" stroke="#444" stroke-width="1"/></svg>
<div class="a" style="left:14px;top:306px;width:143px;height:663px;background:#fff;border-left:1px solid #d8d8dc;border-top:1px solid #e0e0e4"></div>
<div class="a" style="left:141px;top:307px;width:16px;height:662px;background:#f6f6f8;"></div>
<div class="a" style="left:148px;top:323px;width:2px;height:518px;background:#8a8a8c;border-radius:1px"></div>
<div class="a" style="left:161px;top:284px;width:1px;height:687px;background:#9a9a9e;"></div>
<div class="a" style="left:162px;top:600px;width:5px;height:54px;background:#6e6e72;"></div>
<svg class="a" style="left:162px;top:622px;" width="5" height="8" viewBox="0 0 5 8"><path d="M4 0 L0.5 4 L4 8 Z" fill="#fff"/></svg>
<div class="a" style="left:20px;top:511px;width:117px;height:61px;background:linear-gradient(180deg,#a7c6e6,#bcd6ef);border:1.5px solid #5aa6e8"></div>
<div class="a" style="left:42px;top:318px;width:93px;height:52px;background:rgba(0,0,0,.28);"></div>
<div class="a" style="left:40px;top:316px;width:93px;height:52px;background:#000;overflow:hidden">
<div class="a" style="left:14px;top:8px;width:30px;height:1.5px;background:#6fa84a;opacity:.7"></div>
<div class="a" style="left:14px;top:11px;width:30px;height:1.5px;background:#cfcfcf;opacity:.45"></div>
<div class="a" style="left:20px;top:14px;width:18px;height:1.5px;background:#cfcfcf;opacity:.45"></div>
<div class="a" style="left:13px;top:25px;width:30px;height:1px;background:#ddd;opacity:.45"></div>
<div class="a" style="left:13px;top:27px;width:30px;height:1px;background:#ddd;opacity:.45"></div>
<div class="a" style="left:13px;top:29px;width:12px;height:1px;background:#ddd;opacity:.4"></div>
<div class="a" style="left:13px;top:37px;width:28px;height:1px;background:#ddd;opacity:.4"></div>
<div class="a" style="left:13px;top:39px;width:20px;height:1px;background:#ddd;opacity:.4"></div>
<div class="a" style="left:46px;top:6px;width:43px;height:42px;background:#f2f4f6;"></div>
<div class="a" style="left:50px;top:8px;width:12px;height:4px;background:#aab;opacity:.6"></div>
<div class="a" style="left:64px;top:10px;width:14px;height:14px;background:#6a9ad8;transform:skewY(25deg)"></div>
<div class="a" style="left:78px;top:8px;width:9px;height:12px;background:#4a86d0;"></div>
<div class="a" style="left:48px;top:28px;width:7px;height:16px;background:#3d86d0;"></div>
<div class="a" style="left:58px;top:26px;width:16px;height:18px;background:#b8c4d4;"></div>
<div class="a" style="left:76px;top:24px;width:7px;height:18px;background:#3d7cc8;"></div>
<div class="a" style="left:70px;top:36px;width:6px;height:8px;background:#8ab868;"></div>
</div>
<div class="t" style="left:30.00px;top:317.19px;font-size:11px;color:#707074;font-weight:bold;">1</div>
<div class="a" style="left:42px;top:385px;width:93px;height:52px;background:rgba(0,0,0,.28);"></div>
<div class="a" style="left:40px;top:383px;width:93px;height:52px;background:#000;overflow:hidden">
<div class="a" style="left:17px;top:7px;width:14px;height:2px;background:#6fa84a;opacity:.55"></div>
<div class="a" style="left:12px;top:15px;width:60px;height:1.5px;background:#ddd;opacity:.45"></div>
<div class="a" style="left:14px;top:15px;width:8px;height:1.5px;background:#e22;"></div>
<div class="a" style="left:12px;top:18px;width:60px;height:1.5px;background:#ddd;opacity:.38"></div>
<div class="a" style="left:12px;top:22px;width:60px;height:1.5px;background:#ddd;opacity:.45"></div>
<div class="a" style="left:14px;top:22px;width:14px;height:1.5px;background:#e22;"></div>
<div class="a" style="left:12px;top:25px;width:60px;height:1.5px;background:#ddd;opacity:.38"></div>
<div class="a" style="left:12px;top:29px;width:60px;height:1.5px;background:#ddd;opacity:.45"></div>
<div class="a" style="left:14px;top:29px;width:16px;height:1.5px;background:#e22;"></div>
<div class="a" style="left:12px;top:32px;width:14px;height:1.5px;background:#ddd;opacity:.38"></div>
</div>
<div class="t" style="left:30.00px;top:384.19px;font-size:11px;color:#707074;font-weight:bold;">2</div>
<div class="a" style="left:42px;top:451px;width:93px;height:52px;background:rgba(0,0,0,.28);"></div>
<div class="a" style="left:40px;top:449px;width:93px;height:52px;background:#000;overflow:hidden">
<div class="a" style="left:5px;top:10px;width:30px;height:2px;background:#6fa84a;opacity:.55"></div>
<div class="a" style="left:6px;top:17px;width:50px;height:1.5px;background:#ddd;opacity:.45"></div>
<div class="a" style="left:6px;top:17px;width:9px;height:1.5px;background:#e22;"></div>
<div class="a" style="left:6px;top:20px;width:50px;height:1.5px;background:#ddd;opacity:.38"></div>
<div class="a" style="left:6px;top:23px;width:20px;height:1.5px;background:#e22;"></div>
<div class="a" style="left:9px;top:27px;width:45px;height:1.5px;background:#ddd;opacity:.38"></div>
<div class="a" style="left:9px;top:30px;width:45px;height:1.5px;background:#ddd;opacity:.38"></div>
<div class="a" style="left:9px;top:33px;width:45px;height:1.5px;background:#ddd;opacity:.38"></div>
<div class="a" style="left:64px;top:0px;width:29px;height:23px;background:#c9cdd0;"></div>
<div class="a" style="left:70px;top:4px;width:18px;height:16px;background:#e8e8ea;"></div>
<div class="a" style="left:64px;top:24px;width:29px;height:18px;background:#2a6ab0;"></div>
<div class="a" style="left:64px;top:35px;width:29px;height:7px;background:#c86a2a;"></div>
<div class="a" style="left:64px;top:24px;width:29px;height:6px;background:#8ab0d8;"></div>
</div>
<div class="t" style="left:30.00px;top:450.19px;font-size:11px;color:#707074;font-weight:bold;">3</div>
<div class="a" style="left:42px;top:518px;width:93px;height:52px;background:rgba(0,0,0,.28);"></div>
<div class="a" style="left:40px;top:516px;width:93px;height:52px;background:#000;overflow:hidden">
<div class="a" style="left:6px;top:10px;width:37px;height:2px;background:#6fa84a;opacity:.55"></div>
<div class="a" style="left:8px;top:20px;width:48px;height:1.5px;background:#ddd;opacity:.45"></div>
<div class="a" style="left:8px;top:20px;width:18px;height:1.5px;background:#e22;"></div>
<div class="a" style="left:8px;top:23px;width:38px;height:1.5px;background:#ddd;opacity:.45"></div>
<div class="a" style="left:8px;top:26px;width:48px;height:1.5px;background:#ddd;opacity:.38"></div>
<div class="a" style="left:8px;top:26px;width:13px;height:1.5px;background:#e22;"></div>
<div class="a" style="left:8px;top:29px;width:48px;height:1.5px;background:#ddd;opacity:.45"></div>
<div class="a" style="left:8px;top:32px;width:48px;height:1.5px;background:#ddd;opacity:.38"></div>
<div class="a" style="left:8px;top:32px;width:22px;height:1.5px;background:#e22;"></div>
<div class="a" style="left:8px;top:35px;width:48px;height:1.5px;background:#ddd;opacity:.45"></div>
<div class="a" style="left:8px;top:38px;width:6px;height:1.5px;background:#ddd;opacity:.38"></div>
<div class="a" style="left:58px;top:22px;width:33px;height:21px;background:#5a72f0;"></div>
<div class="a" style="left:66px;top:26px;width:16px;height:12px;background:#e8c030;"></div>
<div class="a" style="left:64px;top:34px;width:20px;height:6px;background:#e8e8e8;"></div>
</div>
<div class="t" style="left:30.00px;top:517.19px;font-size:11px;color:#4a5a6a;font-weight:bold;">4</div>
<div class="a" style="left:42px;top:584px;width:93px;height:52px;background:rgba(0,0,0,.28);"></div>
<div class="a" style="left:40px;top:582px;width:93px;height:52px;background:#000;overflow:hidden">
<div class="a" style="left:7px;top:4px;width:32px;height:2px;background:#6fa84a;opacity:.55"></div>
<div class="a" style="left:8px;top:12px;width:28px;height:1.5px;background:#ddd;opacity:.38"></div>
<div class="a" style="left:8px;top:15px;width:28px;height:1.5px;background:#ddd;opacity:.38"></div>
<div class="a" style="left:8px;top:18px;width:28px;height:1.5px;background:#ddd;opacity:.38"></div>
<div class="a" style="left:8px;top:23px;width:28px;height:1.5px;background:#ddd;opacity:.38"></div>
<div class="a" style="left:8px;top:26px;width:28px;height:1.5px;background:#ddd;opacity:.38"></div>
<div class="a" style="left:8px;top:12px;width:4px;height:1.5px;background:#e22;"></div>
<div class="a" style="left:8px;top:23px;width:4px;height:1.5px;background:#e22;"></div>
<div class="a" style="left:49px;top:14px;width:37px;height:21px;background:#6a6a6c;"></div>
<div class="a" style="left:55px;top:18px;width:28px;height:14px;background:#4a4a50;"></div>
</div>
<div class="t" style="left:30.00px;top:583.19px;font-size:11px;color:#707074;font-weight:bold;">5</div>
<div class="a" style="left:42px;top:651px;width:93px;height:52px;background:rgba(0,0,0,.28);"></div>
<div class="a" style="left:40px;top:649px;width:93px;height:52px;background:#000;overflow:hidden">
<div class="a" style="left:8px;top:4px;width:30px;height:2px;background:#6fa84a;opacity:.55"></div>
<div class="a" style="left:8px;top:11px;width:52px;height:1.5px;background:#ddd;opacity:.38"></div>
<div class="a" style="left:8px;top:14px;width:10px;height:1.5px;background:#e22;"></div>
<div class="a" style="left:11px;top:17px;width:36px;height:1.5px;background:#ddd;opacity:.38"></div>
<div class="a" style="left:11px;top:20px;width:36px;height:1.5px;background:#ddd;opacity:.38"></div>
<div class="a" style="left:11px;top:23px;width:44px;height:1.5px;background:#ddd;opacity:.38"></div>
<div class="a" style="left:9px;top:35px;width:50px;height:16px;background:#3a9aa8;opacity:.9"></div>
<div class="a" style="left:9px;top:45px;width:50px;height:6px;background:#d8c8a0;"></div>
</div>
<div class="t" style="left:30.00px;top:650.19px;font-size:11px;color:#707074;font-weight:bold;">6</div>
<div class="a" style="left:42px;top:717px;width:93px;height:52px;background:rgba(0,0,0,.28);"></div>
<div class="a" style="left:40px;top:715px;width:93px;height:52px;background:#000;overflow:hidden">
<div class="a" style="left:6px;top:10px;width:36px;height:2px;background:#6fa84a;opacity:.55"></div>
<div class="a" style="left:9px;top:20px;width:60px;height:1.5px;background:#ddd;opacity:.38"></div>
<div class="a" style="left:9px;top:20px;width:12px;height:1.5px;background:#e22;"></div>
<div class="a" style="left:9px;top:24px;width:60px;height:1.5px;background:#ddd;opacity:.38"></div>
<div class="a" style="left:9px;top:24px;width:10px;height:1.5px;background:#e22;"></div>
<div class="a" style="left:9px;top:27px;width:30px;height:1.5px;background:#ddd;opacity:.38"></div>
<div class="a" style="left:9px;top:30px;width:60px;height:1.5px;background:#ddd;opacity:.38"></div>
<div class="a" style="left:5px;top:37px;width:24px;height:11px;background:#7a7e80;"></div>
<div class="a" style="left:31px;top:37px;width:24px;height:11px;background:#8a8c90;"></div>
<div class="a" style="left:57px;top:37px;width:24px;height:11px;background:#9a8aa0;"></div>
</div>
<div class="t" style="left:30.00px;top:716.19px;font-size:11px;color:#707074;font-weight:bold;">7</div>
<div class="a" style="left:42px;top:784px;width:93px;height:52px;background:rgba(0,0,0,.28);"></div>
<div class="a" style="left:40px;top:782px;width:93px;height:52px;background:#000;overflow:hidden">
<div class="a" style="left:8px;top:11px;width:36px;height:2px;background:#6fa84a;opacity:.55"></div>
<div class="a" style="left:8px;top:19px;width:70px;height:1.5px;background:#ccc;opacity:.4"></div>
<div class="a" style="left:8px;top:19px;width:25px;height:1.5px;background:#a22;"></div>
<div class="a" style="left:8px;top:22px;width:55px;height:1.5px;background:#ccc;opacity:.4"></div>
<div class="a" style="left:8px;top:25px;width:40px;height:1.5px;background:#ccc;opacity:.4"></div>
<div class="a" style="left:8px;top:31px;width:50px;height:1.5px;background:#a22;opacity:.55"></div>
<div class="a" style="left:57px;top:29px;width:23px;height:19px;background:#fff;"></div>
<div class="a" style="left:61px;top:32px;width:16px;height:9px;background:#b0b4c0;"></div>
<div class="a" style="left:70px;top:35px;width:8px;height:6px;background:#e05a3a;"></div>
</div>
<div class="t" style="left:30.00px;top:783.19px;font-size:11px;color:#707074;font-weight:bold;">8</div>
<div class="a" style="left:42px;top:851px;width:93px;height:52px;background:rgba(0,0,0,.28);"></div>
<div class="a" style="left:40px;top:849px;width:93px;height:52px;background:#000;overflow:hidden">
<div class="a" style="left:9px;top:10px;width:36px;height:2px;background:#6fa84a;opacity:.55"></div>
<div class="a" style="left:9px;top:17px;width:18px;height:1.5px;background:#e22;"></div>
<div class="a" style="left:9px;top:21px;width:18px;height:1.5px;background:#e22;"></div>
<div class="a" style="left:13px;top:25px;width:40px;height:1.5px;background:#ddd;opacity:.45"></div>
<div class="a" style="left:13px;top:29px;width:40px;height:1.5px;background:#ddd;opacity:.45"></div>
<div class="a" style="left:13px;top:32px;width:40px;height:1.5px;background:#ddd;opacity:.45"></div>
<div class="a" style="left:57px;top:15px;width:29px;height:19px;background:#4a9cc0;"></div>
<div class="a" style="left:62px;top:19px;width:18px;height:13px;background:#e8f0f4;opacity:.45"></div>
</div>
<div class="t" style="left:30.00px;top:850.19px;font-size:11px;color:#707074;font-weight:bold;">9</div>
<div class="a" style="left:42px;top:917px;width:93px;height:52px;background:rgba(0,0,0,.28);"></div>
<div class="a" style="left:40px;top:915px;width:93px;height:52px;background:#000;overflow:hidden">
<div class="a" style="left:6px;top:16px;width:28px;height:2px;background:#6fa84a;opacity:.55"></div>
<div class="a" style="left:6px;top:24px;width:65px;height:1.5px;background:#ddd;opacity:.45"></div>
<div class="a" style="left:48px;top:24px;width:16px;height:1.5px;background:#6fa84a;"></div>
</div>
<div class="t" style="left:23.50px;top:916.19px;font-size:11px;color:#707074;font-weight:bold;">10</div>
<div class="a" style="left:162px;top:284px;width:946px;height:687px;background:#efeef2;"></div>
<div class="a" style="left:167px;top:956px;width:927px;height:1px;background:#fafafc;"></div>
<div class="a" style="left:1093px;top:284px;width:1px;height:673px;background:#fafafc;"></div>
<div class="a" style="left:1100px;top:459px;width:2px;height:94px;background:#8a8a8c;border-radius:1px"></div>
<div class="a" style="left:476px;top:962px;width:309px;height:2px;background:#8a8a8c;border-radius:1px"></div>
<div class="a" style="left:1108px;top:284px;width:1px;height:687px;background:#9a9a9e;"></div>
<div class="a" style="left:1108px;top:600px;width:6px;height:54px;background:#6e6e72;"></div>
<svg class="a" style="left:1109px;top:622px;" width="5" height="8" viewBox="0 0 5 8"><path d="M1 0 L4.5 4 L1 8 Z" fill="#fff"/></svg>
<div class="a" style="left:13px;top:971px;width:1403px;height:1px;background:#c9c8cc;"></div>
<svg class="a" style="left:22px;top:979px;" width="13" height="13" viewBox="0 0 13 13"><circle cx="6.5" cy="6.5" r="6.5" fill="#f06a78"/><path d="M3.8 3.8 L9.2 9.2 M9.2 3.8 L3.8 9.2" stroke="#fff" stroke-width="1.5"/></svg>
<div class="a" style="left:41px;top:976px;width:180px;height:19px;background:#fff;border-bottom:1px solid #a8a8ac"></div>
<div class="a" style="left:206px;top:977px;width:15px;height:18px;background:#fff;border-left:1px solid #e4e4e8"></div>
<svg class="a" style="left:209px;top:983px;" width="9" height="5" viewBox="0 0 9 5"><path d="M0.5 0.5 L4.5 4.5 L8.5 0.5" fill="none" stroke="#555"/></svg>
<div class="t" style="left:42.60px;top:980.69px;font-size:11px;color:#8a8a8e;">Найти</div>
<svg class="a" style="left:228px;top:982px;" width="14" height="7" viewBox="0 0 14 7"><path d="M0.5 6.5 L7 0.5 L13.5 6.5 Z" fill="none" stroke="#b4b4b8"/></svg>
<svg class="a" style="left:252px;top:982px;" width="14" height="7" viewBox="0 0 14 7"><path d="M0.5 0.5 L7 6.5 L13.5 0.5 Z" fill="none" stroke="#b4b4b8"/></svg>
<div class="t" style="left:273.30px;top:980.69px;font-size:11px;color:#9a9a9e;">Найти все</div>
<div class="a" style="left:330px;top:981px;width:10px;height:9px;background:#fff;border:1px solid #333;border-radius:3px"></div>
<div class="t" style="left:342.50px;top:980.69px;font-size:11px;color:#222;">Учитывать регистр</div>
<div class="a" style="left:440px;top:981px;width:10px;height:9px;background:#fff;border:1px solid #333;border-radius:3px"></div>
<div class="t" style="left:453.00px;top:980.69px;font-size:11px;color:#222;">Match Diacritics</div>
<div class="a" style="left:535px;top:978px;width:1px;height:14px;background:#dcdce0;"></div>
<svg class="a" style="left:543px;top:978px;" width="16" height="15" viewBox="0 0 16 15"><circle cx="9.5" cy="6" r="5" fill="#fff" stroke="#333" stroke-width="1"/><path d="M6 9.5 L1 14.5" stroke="#333" stroke-width="1.5"/><text x="9.5" y="8" font-size="7" text-anchor="middle" fill="#3d8fd6" font-family="Liberation Sans">a</text><text x="13" y="15" font-size="8" text-anchor="middle" fill="#333" font-family="Liberation Sans">d</text></svg>
<div class="a" style="left:565px;top:978px;width:1px;height:14px;background:#dcdce0;"></div>
<div class="a" style="left:13px;top:1000px;width:1403px;height:1px;background:#c9c8cc;"></div>
<div class="t" style="left:21.90px;top:1005.81px;font-size:10.5px;color:#222;">Слайд 4 из 12</div>
<div class="a" style="left:93.5px;top:1003px;width:1px;height:14px;background:#d4d4d8;"></div>
<div class="a" style="left:445.5px;top:1003px;width:1px;height:14px;background:#d4d4d8;"></div>
<div class="a" style="left:771.5px;top:1003px;width:1px;height:14px;background:#d4d4d8;"></div>
<div class="a" style="left:952.5px;top:1003px;width:1px;height:14px;background:#d4d4d8;"></div>
<div class="a" style="left:969px;top:1003px;width:1px;height:14px;background:#d4d4d8;"></div>
<div class="a" style="left:992.5px;top:1003px;width:1px;height:14px;background:#d4d4d8;"></div>
<div class="a" style="left:1248.5px;top:1003px;width:1px;height:14px;background:#d4d4d8;"></div>
<div class="a" style="left:1266.5px;top:1003px;width:1px;height:14px;background:#d4d4d8;"></div>
<div class="a" style="left:1372px;top:1003px;width:1px;height:14px;background:#d4d4d8;"></div>
<div class="t" style="left:453.30px;top:1005.39px;font-size:11px;color:#222;">Заголовок и подпись</div>
<svg class="a" style="left:779px;top:1006px;" width="12" height="9" viewBox="0 0 12 9"><path d="M2.5 0 L2.5 5 M0 2.5 L5 2.5" stroke="#3d8fd6"/><path d="M2.5 3.5 L2.5 8.5 L11.5 8.5 L11.5 3.5 Z" fill="none" stroke="#333"/></svg>
<div class="t" style="left:794.40px;top:1007.69px;font-size:11px;color:#222;">9.50 / 23.34</div>
<svg class="a" style="left:866px;top:1006px;" width="12" height="9" viewBox="0 0 12 9"><path d="M0 5 L3 5 M1.5 2 L1.5 8.5" stroke="#3d8fd6"/><rect x="3.5" y="2.5" width="8" height="5" fill="none" stroke="#333"/><path d="M3 0.5 L12 0.5" stroke="#333"/></svg>
<div class="t" style="left:881.90px;top:1007.69px;font-size:11px;color:#222;">0.00 x 0.00</div>
<svg class="a" style="left:956px;top:1004px;" width="12" height="12" viewBox="0 0 12 12"><rect x="0.5" y="0.5" width="11" height="11" rx="1" fill="none" stroke="#aaa"/><rect x="2.5" y="0.5" width="7" height="4" fill="none" stroke="#aaa"/><rect x="2.5" y="7" width="7" height="4.5" fill="none" stroke="#aaa"/></svg>
<div class="t" style="left:1101.90px;top:1005.41px;font-size:10.5px;color:#222;">Русский</div>
<svg class="a" style="left:1253px;top:1005px;" width="11" height="11" viewBox="0 0 11 11"><path d="M5.5 0 L5.5 11 M0 5.5 L11 5.5" stroke="#2d8fd6" stroke-width="1.3"/><path d="M3.5 2 L5.5 0 L7.5 2 M3.5 9 L5.5 11 L7.5 9 M2 3.5 L0 5.5 L2 7.5 M9 3.5 L11 5.5 L9 7.5" fill="none" stroke="#2d8fd6"/></svg>
<div class="a" style="left:1273px;top:1010px;width:8px;height:1.5px;background:#333;"></div>
<div class="a" style="left:1284px;top:1010px;width:73px;height:1px;background:#666;"></div>
<div class="a" style="left:1309px;top:1006px;width:3px;height:9px;background:#fff;border:1px solid #555"></div>
<div class="a" style="left:1319px;top:1008px;width:1px;height:5px;background:#666;"></div>
<svg class="a" style="left:1360px;top:1006px;" width="8" height="8" viewBox="0 0 8 8"><path d="M4 0 L4 8 M0 4 L8 4" stroke="#222" stroke-width="1.5"/></svg>
<div class="t" style="left:1382.00px;top:1004.99px;font-size:11px;color:#222;">76 %</div><div class="a" style="left:181px;top:367px;width:888px;height:499px;background:#000;"></div>
<svg class="a" style="left:181px;top:367px;" width="888" height="499" viewBox="0 0 888 499"><circle cx="306" cy="4" r="30" fill="none" stroke="#3a3a3a" stroke-width="1"/><path d="M283 0 A23 23 0 0 0 328 16" fill="none" stroke="#555" stroke-width="1.5"/><circle cx="852" cy="95.5" r="30" fill="none" stroke="#7a7a7a" stroke-width="1.6" stroke-dasharray="150 40"/><circle cx="852" cy="95.5" r="36" fill="none" stroke="#555" stroke-width="1" stroke-dasharray="120 80"/><circle cx="852" cy="95.5" r="64" fill="none" stroke="#4a4a4a" stroke-width="1" stroke-dasharray="1.5 2.5"/><circle cx="852" cy="95.5" r="104" fill="none" stroke="#6a6a6a" stroke-width="1"/><circle cx="852" cy="95.5" r="123" fill="none" stroke="#8a8a8a" stroke-width="1"/><circle cx="852" cy="95.5" r="115" fill="none" stroke="#2e2e2e" stroke-width="5" stroke-dasharray="1 2.5"/><circle cx="852" cy="95.5" r="136" fill="none" stroke="#262626" stroke-width="7" stroke-dasharray="1 3"/><text x="728.6" y="23.9" font-size="6.5" fill="#4a4a4a" text-anchor="middle" dominant-baseline="middle" font-family="Liberation Sans" transform="rotate(-59.9 728.6 23.9)">200</text><text x="717.6" y="43.8" font-size="6.5" fill="#4a4a4a" text-anchor="middle" dominant-baseline="middle" font-family="Liberation Sans" transform="rotate(-69.0 717.6 43.8)">190</text><text x="710.7" y="70.6" font-size="6.5" fill="#4a4a4a" text-anchor="middle" dominant-baseline="middle" font-family="Liberation Sans" transform="rotate(-80.0 710.7 70.6)">180</text><text x="707.7" y="97.5" font-size="6.5" fill="#4a4a4a" text-anchor="middle" dominant-baseline="middle" font-family="Liberation Sans" transform="rotate(269.2 707.7 97.5)">170</text><text x="710.7" y="125.4" font-size="6.5" fill="#4a4a4a" text-anchor="middle" dominant-baseline="middle" font-family="Liberation Sans" transform="rotate(258.1 710.7 125.4)">160</text><text x="718.6" y="151.3" font-size="6.5" fill="#4a4a4a" text-anchor="middle" dominant-baseline="middle" font-family="Liberation Sans" transform="rotate(247.3 718.6 151.3)">150</text><text x="730.6" y="174.2" font-size="6.5" fill="#4a4a4a" text-anchor="middle" dominant-baseline="middle" font-family="Liberation Sans" transform="rotate(237.0 730.6 174.2)">140</text><text x="748.5" y="195.0" font-size="6.5" fill="#4a4a4a" text-anchor="middle" dominant-baseline="middle" font-family="Liberation Sans" transform="rotate(226.1 748.5 195.0)">130</text><path d="M660 0 L820 225" stroke="#444" stroke-width="1" stroke-dasharray="2 3"/><path d="M756 40 L763 28 L768 38" fill="none" stroke="#666" stroke-width="1.5"/><circle cx="24" cy="491" r="50" fill="none" stroke="#3e3e3e" stroke-width="2"/><circle cx="22" cy="485" r="62" fill="none" stroke="#333" stroke-width="1"/><path d="M107 499 A85 85 0 0 0 35 410" fill="none" stroke="#2e2e2e" stroke-width="1" stroke-dasharray="3 3"/></svg>
<div class="sl" style="left:234px;top:472.53px;font-size:38px;color:#72aa4c;transform:scaleY(.88);transform-origin:0 32.17px">Маркетинговий план</div>
<div class="a" style="left:235px;top:586.5px;width:6px;height:6px;background:#fff;border-radius:50%"></div>
<div class="a" style="left:235px;top:649.5px;width:6px;height:6px;background:#fff;border-radius:50%"></div>
<div class="a" style="left:235px;top:712.5px;width:6px;height:6px;background:#fff;border-radius:50%"></div>
<div class="a jl" style="left:259.5px;top:580.87px;width:474px;font-size:20px"><span><b style="font-weight:normal;color:#ff1f1f">Цільова</b></span><span><b style="font-weight:normal;color:#ff1f1f">аудиторія</b>:</span><span>Власники</span><span>приватних</span><span>будинків</span></div>
<div class="sl" style="left:259.5px;top:607.47px;font-size:20px">(30-55 років), малий бізнес (HoReCa).</div>
<div class="a jl" style="left:259.5px;top:643.67px;width:474px;font-size:20px"><span><b style="font-weight:normal;color:#ff1f1f">Конкуренція</b>:</span><span>Перемагаємо</span><span>завдяки</span></div>
<div class="sl" style="left:259.5px;top:669.97px;font-size:20px;letter-spacing:.2px">комплексному підходу – від аудиту до сервісу.</div>
<div class="a jl" style="left:259.5px;top:706.17px;width:474px;font-size:20px"><span><b style="font-weight:normal;color:#ff1f1f">Канали</b></span><span><b style="font-weight:normal;color:#ff1f1f">просування</b>:</span><span>Google</span><span>ads,</span><span>Youtube,</span></div>
<div class="a jl" style="left:259.5px;top:732.77px;width:474px;font-size:20px"><span>партнерства</span><span>з</span><span>котеджними</span><span>містечками,</span><span>сарафане</span></div>
<div class="sl" style="left:259.5px;top:759.07px;font-size:20px">радіо.</div>
<div class="a" style="left:526px;top:627px;width:44px;height:1px;background:transparent;border-bottom:1px dotted #c02020"></div>
<div class="a" style="left:654px;top:752px;width:80px;height:1px;background:transparent;border-bottom:1px dotted #c02020"></div>
<div class="a" style="left:654px;top:726px;width:68px;height:1px;background:transparent;border-bottom:1px dotted #c02020"></div>
<svg class="a" style="left:741px;top:578px;" width="325" height="198" viewBox="0 0 325 198"><rect width="325" height="198" fill="#5673f6"/>
<g fill="none" stroke="#dfe6ff" stroke-width="0.9" opacity=".85"><ellipse cx="160" cy="140" rx="137" ry="30"/><ellipse cx="170" cy="150" rx="125" ry="25" transform="rotate(-3 170 150)"/><ellipse cx="150" cy="128" rx="122" ry="22" transform="rotate(4 150 128)"/></g>
<polygon points="198,22 290,63 260,140 191,120" fill="#f2f2f2"/>
<g stroke="#9a9aa0" stroke-width=".4"><line x1="198.0" y1="22.0" x2="290.0" y2="63.0"/><line x1="196.9" y1="30.0" x2="287.1" y2="70.7"/><line x1="195.8" y1="38.0" x2="284.3" y2="78.4"/><line x1="194.6" y1="46.0" x2="281.4" y2="86.1"/><line x1="193.5" y1="54.0" x2="278.6" y2="93.8"/><line x1="192.4" y1="62.0" x2="275.7" y2="101.5"/><line x1="191.3" y1="70.0" x2="272.8" y2="109.2"/><line x1="190.2" y1="78.0" x2="270.0" y2="116.9"/><line x1="189.0" y1="86.0" x2="267.1" y2="124.6"/><line x1="187.9" y1="94.0" x2="264.3" y2="132.3"/><line x1="198.0" y1="22.0" x2="191.0" y2="120.0"/><line x1="207.2" y1="26.1" x2="197.9" y2="122.0"/><line x1="216.4" y1="30.2" x2="204.8" y2="124.0"/><line x1="225.6" y1="34.3" x2="211.7" y2="126.0"/><line x1="234.8" y1="38.4" x2="218.6" y2="128.0"/><line x1="244.0" y1="42.5" x2="225.5" y2="130.0"/><line x1="253.2" y1="46.6" x2="232.4" y2="132.0"/><line x1="262.4" y1="50.7" x2="239.3" y2="134.0"/><line x1="271.6" y1="54.8" x2="246.2" y2="136.0"/><line x1="280.8" y1="58.9" x2="253.1" y2="138.0"/></g>
<rect x="256" y="68" width="20" height="12" fill="#e0b820" transform="rotate(20 266 74)"/>
<polygon points="54,108 97,78 142,75 138,120 58,123" fill="#e6e6e6"/>
<g stroke="#777" stroke-width=".8"><line x1="62" y1="100.0" x2="135" y2="90.0"/><line x1="64" y1="102.5" x2="135" y2="92.5"/><line x1="66" y1="105.0" x2="135" y2="95.0"/><line x1="68" y1="107.5" x2="135" y2="97.5"/><line x1="70" y1="110.0" x2="135" y2="100.0"/><line x1="72" y1="112.5" x2="135" y2="102.5"/><line x1="74" y1="115.0" x2="135" y2="105.0"/><line x1="76" y1="117.5" x2="135" y2="107.5"/><line x1="78" y1="120.0" x2="135" y2="110.0"/><line x1="80" y1="122.5" x2="135" y2="112.5"/></g>
<text x="114" y="118" font-size="9" font-weight="bold" fill="#111" font-family="Liberation Sans">AMAZI</text>
<polygon points="60,16 60,35 138,43" fill="#f5c518"/><polygon points="89,44 89,54 138,48" fill="#f5c518"/><polygon points="57,63 62,83 138,54" fill="#f5c518"/>
<polygon points="142,52 243,52 230,140 138,116" fill="#111"/>
<polygon points="147,60 236,60 225,133 143,111" fill="#f6c50e"/>
<defs><linearGradient id="hg" x1="0" y1="0" x2="1" y2="0.3"><stop offset="0" stop-color="#8a8a8a"/><stop offset=".5" stop-color="#d0d0d0"/><stop offset="1" stop-color="#b8b8b8"/></linearGradient><linearGradient id="mg" x1="0" y1="0" x2="0" y2="1"><stop offset="0" stop-color="#5a5a5a"/><stop offset=".5" stop-color="#333"/><stop offset="1" stop-color="#222"/></linearGradient></defs>
<rect x="172" y="62" width="18" height="47" rx="3" fill="#222"/><path d="M165 74 Q178 66 194 72 L204 80 L236 98 L234 130 L208 108 Q200 112 190 111 L168 106 Q162 90 165 74 Z" fill="url(#hg)"/><path d="M168 80 L190 80 M167 88 L190 88 M167 96 L190 96" stroke="#666" stroke-width="1"/>

<path d="M142 32 L198 31 Q206 31 206 47 Q206 63 198 63 L144 69 Z" fill="url(#mg)"/>
<rect x="162" y="40" width="37" height="8" rx="4" fill="#d8d8d8"/>
<ellipse cx="135" cy="45" rx="14" ry="30" fill="#9a9a9a" transform="rotate(8 135 45)"/>
<ellipse cx="134" cy="45" rx="11.5" ry="27" fill="#151515" transform="rotate(8 134 45)"/>
<ellipse cx="139" cy="44" rx="3" ry="5" fill="#e8e8e8"/>
<polygon points="73,150 135,120 230,142 165,187" fill="#e2e2e2"/>
<polygon points="105,135 138,120 220,147 187,164" fill="#3a3a3a"/><g stroke="#9a9a9a" stroke-width=".8" stroke-dasharray="2 2.2"><line x1="112" y1="134" x2="192" y2="161"/><line x1="118" y1="131" x2="198" y2="158"/><line x1="124" y1="128.5" x2="204" y2="155.5"/><line x1="130" y1="126" x2="210" y2="153"/></g>
<polygon points="73,150 165,187 168,190 74,154" fill="#aaa"/></svg><svg class="a" style="left:1115px;top:291px;" width="3" height="12" viewBox="0 0 3 12"><path d="M1.5 0 L1.5 12" stroke="#555" stroke-width="1.4" stroke-dasharray="1.4 1.6"/></svg>
<div class="t" style="left:1122.00px;top:292.06px;font-size:10.8px;color:#111;font-weight:bold;">Навигатор</div>
<div class="t" style="left:1364.00px;top:292.11px;font-size:10.5px;color:#333;">?</div>
<svg class="a" style="left:1379px;top:293px;" width="7" height="7" viewBox="0 0 7 7"><path d="M0.5 0.5 L6.5 6.5 M6.5 0.5 L0.5 6.5" stroke="#444"/></svg>
<svg class="a" style="left:1397px;top:291px;" width="9" height="7" viewBox="0 0 9 7"><path d="M0 1 L9 1 M0 3.5 L9 3.5 M0 6 L9 6" stroke="#333" stroke-width="1"/></svg>
<svg class="a" style="left:1124px;top:316px;" width="10" height="12" viewBox="0 0 10 12"><path d="M0.7 0 L0.7 12" stroke="#333" stroke-width="1.1"/><path d="M8.5 1 L3 6 L8.5 11 Z" fill="none" stroke="#333" stroke-width=".9"/></svg>
<svg class="a" style="left:1143px;top:317px;" width="8" height="11" viewBox="0 0 8 11"><path d="M7 0.5 L1 5.5 L7 10.5 Z" fill="none" stroke="#333" stroke-width=".9"/></svg>
<svg class="a" style="left:1161px;top:317px;" width="8" height="11" viewBox="0 0 8 11"><path d="M1 0.5 L7 5.5 L1 10.5 Z" fill="none" stroke="#333" stroke-width=".9"/></svg>
<svg class="a" style="left:1178px;top:316px;" width="10" height="12" viewBox="0 0 10 12"><path d="M8.3 0 L8.3 12" stroke="#333" stroke-width="1.1"/><path d="M1.5 1 L7 6 L1.5 11 Z" fill="none" stroke="#333" stroke-width=".9"/></svg>
<div class="a" style="left:1194.5px;top:318px;width:1px;height:10px;background:#d8d8dc;"></div>
<svg class="a" style="left:1200px;top:316px;" width="13" height="12" viewBox="0 0 13 12"><rect x="0.5" y="0.5" width="7" height="6" fill="#fff" stroke="#444" stroke-width=".9"/><rect x="5" y="5" width="7.5" height="6.5" fill="#fff" stroke="#444" stroke-width=".9"/><path d="M2 4 L5 7 L9 7" fill="none" stroke="#2d8fd6" stroke-width="1.1"/></svg>
<svg class="a" style="left:1218px;top:323px;" width="5" height="3" viewBox="0 0 5 3"><path d="M0 0 L5 0 L2.5 3 Z" fill="#222"/></svg>
<svg class="a" style="left:1226px;top:316px;" width="13" height="12" viewBox="0 0 13 12"><rect x="0.5" y="5" width="6.5" height="6.5" fill="#fff" stroke="#444" stroke-width=".9"/><circle cx="9" cy="4" r="3.6" fill="#fff" stroke="#444" stroke-width=".9"/><path d="M8 4.5 L12.5 9 L8 13 L3.5 9 Z" fill="#fff" stroke="#444" stroke-width=".9"/></svg>
<svg class="a" style="left:1244px;top:323px;" width="5" height="3" viewBox="0 0 5 3"><path d="M0 0 L5 0 L2.5 3 Z" fill="#222"/></svg>
<div class="a" style="left:1119px;top:335px;width:264px;height:609px;background:#fff;border:1px solid #a0a0a4"></div>
<div class="a" style="left:1121px;top:341px;width:9px;height:8px;background:#fff;border:1px solid #c0c0c6;border-radius:1px"></div>
<div class="a" style="left:1123px;top:344px;width:5px;height:1px;background:#2a4aa0;"></div>
<svg class="a" style="left:1135px;top:338px;" width="9" height="12" viewBox="0 0 9 12"><path d="M0.5 0.5 L6 0.5 L8.5 3 L8.5 11.5 L0.5 11.5 Z" fill="#fff" stroke="#555" stroke-width=".9"/><path d="M6 0.5 L6 3 L8.5 3" fill="none" stroke="#555" stroke-width=".7"/><rect x="2" y="6" width="3" height="4" fill="#f6b84a"/><rect x="4" y="6.5" width="3" height="3" fill="none" stroke="#2d6fc0" stroke-width=".9"/></svg>
<div class="t" style="left:1149.50px;top:339.23px;font-size:10.6px;color:#1a1a1a;">EcoEnergy Install – Енергонезалежність тво</div>
<svg class="a" style="left:1147px;top:355px;" width="14" height="13" viewBox="0 0 14 13"><rect x="0.5" y="1" width="2.2" height="10.5" fill="#fde9c8" stroke="#f08a1e" stroke-width=".9"/><rect x="4" y="0.5" width="9" height="2.5" fill="#8a8a8a"/><path d="M4.5 3 L4.5 5 M12.5 3 L12.5 5" stroke="#8a8a8a"/><circle cx="9.3" cy="8.6" r="3.7" fill="#5aa0e8" stroke="#2d6fc0" stroke-width=".8"/></svg>
<div class="t" style="left:1165.30px;top:356.03px;font-size:10.6px;color:#1a1a1a;">Заголовок 1</div>
<svg class="a" style="left:1147px;top:372px;" width="14" height="13" viewBox="0 0 14 13"><rect x="0.5" y="1" width="2.2" height="10.5" fill="#fde9c8" stroke="#f08a1e" stroke-width=".9"/><rect x="4" y="0.5" width="9" height="2.5" fill="#8a8a8a"/><path d="M4.5 3 L4.5 5 M12.5 3 L12.5 5" stroke="#8a8a8a"/><circle cx="9.3" cy="8.6" r="3.7" fill="#5aa0e8" stroke="#2d6fc0" stroke-width=".8"/></svg>
<div class="t" style="left:1165.30px;top:372.83px;font-size:10.6px;color:#1a1a1a;">Подзаголовок 2</div>
<svg class="a" style="left:1147px;top:389px;" width="14" height="13" viewBox="0 0 14 13"><rect x="0.5" y="1" width="2.2" height="10.5" fill="#fde9c8" stroke="#f08a1e" stroke-width=".9"/><rect x="4" y="0.5" width="9" height="2.5" fill="#8a8a8a"/><path d="M4.5 3 L4.5 5 M12.5 3 L12.5 5" stroke="#8a8a8a"/><circle cx="9.3" cy="8.6" r="3.7" fill="#5aa0e8" stroke="#2d6fc0" stroke-width=".8"/></svg>
<div class="t" style="left:1165.30px;top:389.63px;font-size:10.6px;color:#1a1a1a;">Подзаголовок 2</div>
<svg class="a" style="left:1147px;top:406px;" width="14" height="13" viewBox="0 0 14 13"><rect x="0.5" y="5" width="6.5" height="6.5" fill="#fff" stroke="#444" stroke-width=".9"/><circle cx="9" cy="4" r="3.6" fill="#fff" stroke="#444" stroke-width=".9"/><path d="M8 4.5 L12.5 9 L8 13 L3.5 9 Z" fill="#fff" stroke="#444" stroke-width=".9"/></svg>
<div class="t" style="left:1165.30px;top:406.43px;font-size:10.6px;color:#1a1a1a;">Рисунок 5</div>
<div class="a" style="left:1121px;top:425px;width:9px;height:8px;background:#fff;border:1px solid #c0c0c6;border-radius:1px"></div>
<div class="a" style="left:1123px;top:428px;width:5px;height:1px;background:#2a4aa0;"></div>
<svg class="a" style="left:1135px;top:422px;" width="9" height="12" viewBox="0 0 9 12"><path d="M0.5 0.5 L6 0.5 L8.5 3 L8.5 11.5 L0.5 11.5 Z" fill="#fff" stroke="#555" stroke-width=".9"/><path d="M6 0.5 L6 3 L8.5 3" fill="none" stroke="#555" stroke-width=".7"/><rect x="2" y="6" width="3" height="4" fill="#f6b84a"/><rect x="4" y="6.5" width="3" height="3" fill="none" stroke="#2d6fc0" stroke-width=".9"/></svg>
<div class="t" style="left:1149.50px;top:423.23px;font-size:10.6px;color:#1a1a1a;">Страница 2</div>
<svg class="a" style="left:1147px;top:439px;" width="14" height="13" viewBox="0 0 14 13"><rect x="0.5" y="1" width="2.2" height="10.5" fill="#fde9c8" stroke="#f08a1e" stroke-width=".9"/><rect x="4" y="0.5" width="9" height="2.5" fill="#8a8a8a"/><path d="M4.5 3 L4.5 5 M12.5 3 L12.5 5" stroke="#8a8a8a"/><circle cx="9.3" cy="8.6" r="3.7" fill="#5aa0e8" stroke="#2d6fc0" stroke-width=".8"/></svg>
<div class="t" style="left:1165.30px;top:440.03px;font-size:10.6px;color:#1a1a1a;">Объект 2</div>
<svg class="a" style="left:1147px;top:456px;" width="14" height="13" viewBox="0 0 14 13"><rect x="0.5" y="1" width="2.2" height="10.5" fill="#fde9c8" stroke="#f08a1e" stroke-width=".9"/><rect x="4" y="0.5" width="9" height="2.5" fill="#8a8a8a"/><path d="M4.5 3 L4.5 5 M12.5 3 L12.5 5" stroke="#8a8a8a"/><circle cx="9.3" cy="8.6" r="3.7" fill="#5aa0e8" stroke="#2d6fc0" stroke-width=".8"/></svg>
<div class="t" style="left:1165.30px;top:456.83px;font-size:10.6px;color:#1a1a1a;">Объект 2</div>
<div class="a" style="left:1121px;top:475px;width:9px;height:8px;background:#fff;border:1px solid #c0c0c6;border-radius:1px"></div>
<div class="a" style="left:1123px;top:479px;width:5px;height:1px;background:#2a4aa0;"></div>
<svg class="a" style="left:1135px;top:473px;" width="9" height="12" viewBox="0 0 9 12"><path d="M0.5 0.5 L6 0.5 L8.5 3 L8.5 11.5 L0.5 11.5 Z" fill="#fff" stroke="#555" stroke-width=".9"/><path d="M6 0.5 L6 3 L8.5 3" fill="none" stroke="#555" stroke-width=".7"/><rect x="2" y="6" width="3" height="4" fill="#f6b84a"/><rect x="4" y="6.5" width="3" height="3" fill="none" stroke="#2d6fc0" stroke-width=".9"/></svg>
<div class="t" style="left:1149.50px;top:473.63px;font-size:10.6px;color:#1a1a1a;">Страница 3</div>
<svg class="a" style="left:1147px;top:490px;" width="14" height="13" viewBox="0 0 14 13"><rect x="0.5" y="1" width="2.2" height="10.5" fill="#fde9c8" stroke="#f08a1e" stroke-width=".9"/><rect x="4" y="0.5" width="9" height="2.5" fill="#8a8a8a"/><path d="M4.5 3 L4.5 5 M12.5 3 L12.5 5" stroke="#8a8a8a"/><circle cx="9.3" cy="8.6" r="3.7" fill="#5aa0e8" stroke="#2d6fc0" stroke-width=".8"/></svg>
<div class="t" style="left:1165.30px;top:490.43px;font-size:10.6px;color:#1a1a1a;">Текст 2</div>
<svg class="a" style="left:1147px;top:506px;" width="14" height="13" viewBox="0 0 14 13"><rect x="0.5" y="1" width="2.2" height="10.5" fill="#fde9c8" stroke="#f08a1e" stroke-width=".9"/><rect x="4" y="0.5" width="9" height="2.5" fill="#8a8a8a"/><path d="M4.5 3 L4.5 5 M12.5 3 L12.5 5" stroke="#8a8a8a"/><circle cx="9.3" cy="8.6" r="3.7" fill="#5aa0e8" stroke="#2d6fc0" stroke-width=".8"/></svg>
<div class="t" style="left:1165.30px;top:507.23px;font-size:10.6px;color:#1a1a1a;">Текст 2</div>
<svg class="a" style="left:1147px;top:523px;" width="14" height="13" viewBox="0 0 14 13"><rect x="0.5" y="1" width="2.2" height="10.5" fill="#fde9c8" stroke="#f08a1e" stroke-width=".9"/><rect x="4" y="0.5" width="9" height="2.5" fill="#8a8a8a"/><path d="M4.5 3 L4.5 5 M12.5 3 L12.5 5" stroke="#8a8a8a"/><circle cx="9.3" cy="8.6" r="3.7" fill="#5aa0e8" stroke="#2d6fc0" stroke-width=".8"/></svg>
<div class="t" style="left:1165.30px;top:524.03px;font-size:10.6px;color:#1a1a1a;">AutoShape 8</div>
<svg class="a" style="left:1147px;top:540px;" width="14" height="13" viewBox="0 0 14 13"><rect x="0.5" y="5" width="6.5" height="6.5" fill="#fff" stroke="#444" stroke-width=".9"/><circle cx="9" cy="4" r="3.6" fill="#fff" stroke="#444" stroke-width=".9"/><path d="M8 4.5 L12.5 9 L8 13 L3.5 9 Z" fill="#fff" stroke="#444" stroke-width=".9"/></svg>
<div class="t" style="left:1165.30px;top:540.83px;font-size:10.6px;color:#1a1a1a;">Picture 10</div>
<svg class="a" style="left:1147px;top:557px;" width="14" height="13" viewBox="0 0 14 13"><rect x="0.5" y="5" width="6.5" height="6.5" fill="#fff" stroke="#444" stroke-width=".9"/><circle cx="9" cy="4" r="3.6" fill="#fff" stroke="#444" stroke-width=".9"/><path d="M8 4.5 L12.5 9 L8 13 L3.5 9 Z" fill="#fff" stroke="#444" stroke-width=".9"/></svg>
<div class="t" style="left:1165.30px;top:557.63px;font-size:10.6px;color:#1a1a1a;">Picture 12</div>
<div class="a" style="left:1120px;top:571px;width:247px;height:17px;background:#0a72d2;"></div>
<div class="a" style="left:1121px;top:576px;width:9px;height:8px;background:#f4f6fa;border:1px solid #c0c0c6;border-radius:1px"></div>
<div class="a" style="left:1123px;top:580px;width:5px;height:1px;background:#2a4aa0;"></div>
<svg class="a" style="left:1135px;top:574px;" width="9" height="12" viewBox="0 0 9 12"><path d="M0.5 0.5 L6 0.5 L8.5 3 L8.5 11.5 L0.5 11.5 Z" fill="#fff" stroke="#555" stroke-width=".9"/><path d="M6 0.5 L6 3 L8.5 3" fill="none" stroke="#555" stroke-width=".7"/><rect x="2" y="6" width="3" height="4" fill="#f6b84a"/><rect x="4" y="6.5" width="3" height="3" fill="none" stroke="#2d6fc0" stroke-width=".9"/></svg>
<div class="t" style="left:1149.50px;top:574.43px;font-size:10.6px;color:#fff;">Страница 4</div>
<svg class="a" style="left:1147px;top:590px;" width="14" height="13" viewBox="0 0 14 13"><rect x="0.5" y="1" width="2.2" height="10.5" fill="#fde9c8" stroke="#f08a1e" stroke-width=".9"/><rect x="4" y="0.5" width="9" height="2.5" fill="#8a8a8a"/><path d="M4.5 3 L4.5 5 M12.5 3 L12.5 5" stroke="#8a8a8a"/><circle cx="9.3" cy="8.6" r="3.7" fill="#5aa0e8" stroke="#2d6fc0" stroke-width=".8"/></svg>
<div class="t" style="left:1165.30px;top:591.23px;font-size:10.6px;color:#1a1a1a;">Текст 2</div>
<svg class="a" style="left:1147px;top:607px;" width="14" height="13" viewBox="0 0 14 13"><rect x="0.5" y="1" width="2.2" height="10.5" fill="#fde9c8" stroke="#f08a1e" stroke-width=".9"/><rect x="4" y="0.5" width="9" height="2.5" fill="#8a8a8a"/><path d="M4.5 3 L4.5 5 M12.5 3 L12.5 5" stroke="#8a8a8a"/><circle cx="9.3" cy="8.6" r="3.7" fill="#5aa0e8" stroke="#2d6fc0" stroke-width=".8"/></svg>
<div class="t" style="left:1165.30px;top:608.03px;font-size:10.6px;color:#1a1a1a;">Текст 2</div>
<svg class="a" style="left:1147px;top:624px;" width="14" height="13" viewBox="0 0 14 13"><rect x="0.5" y="5" width="6.5" height="6.5" fill="#fff" stroke="#444" stroke-width=".9"/><circle cx="9" cy="4" r="3.6" fill="#fff" stroke="#444" stroke-width=".9"/><path d="M8 4.5 L12.5 9 L8 13 L3.5 9 Z" fill="#fff" stroke="#444" stroke-width=".9"/></svg>
<div class="t" style="left:1165.30px;top:624.83px;font-size:10.6px;color:#1a1a1a;">Picture 2</div>
<div class="a" style="left:1121px;top:643px;width:9px;height:8px;background:#fff;border:1px solid #c0c0c6;border-radius:1px"></div>
<div class="a" style="left:1123px;top:647px;width:5px;height:1px;background:#2a4aa0;"></div>
<svg class="a" style="left:1135px;top:641px;" width="9" height="12" viewBox="0 0 9 12"><path d="M0.5 0.5 L6 0.5 L8.5 3 L8.5 11.5 L0.5 11.5 Z" fill="#fff" stroke="#555" stroke-width=".9"/><path d="M6 0.5 L6 3 L8.5 3" fill="none" stroke="#555" stroke-width=".7"/><rect x="2" y="6" width="3" height="4" fill="#f6b84a"/><rect x="4" y="6.5" width="3" height="3" fill="none" stroke="#2d6fc0" stroke-width=".9"/></svg>
<div class="t" style="left:1149.50px;top:641.63px;font-size:10.6px;color:#1a1a1a;">Страница 5</div>
<svg class="a" style="left:1147px;top:658px;" width="14" height="13" viewBox="0 0 14 13"><rect x="0.5" y="1" width="2.2" height="10.5" fill="#fde9c8" stroke="#f08a1e" stroke-width=".9"/><rect x="4" y="0.5" width="9" height="2.5" fill="#8a8a8a"/><path d="M4.5 3 L4.5 5 M12.5 3 L12.5 5" stroke="#8a8a8a"/><circle cx="9.3" cy="8.6" r="3.7" fill="#5aa0e8" stroke="#2d6fc0" stroke-width=".8"/></svg>
<div class="t" style="left:1165.30px;top:658.43px;font-size:10.6px;color:#1a1a1a;">Текст 2</div>
<svg class="a" style="left:1147px;top:674px;" width="14" height="13" viewBox="0 0 14 13"><rect x="0.5" y="1" width="2.2" height="10.5" fill="#fde9c8" stroke="#f08a1e" stroke-width=".9"/><rect x="4" y="0.5" width="9" height="2.5" fill="#8a8a8a"/><path d="M4.5 3 L4.5 5 M12.5 3 L12.5 5" stroke="#8a8a8a"/><circle cx="9.3" cy="8.6" r="3.7" fill="#5aa0e8" stroke="#2d6fc0" stroke-width=".8"/></svg>
<div class="t" style="left:1165.30px;top:675.23px;font-size:10.6px;color:#1a1a1a;">Текст 2</div>
<svg class="a" style="left:1147px;top:691px;" width="14" height="13" viewBox="0 0 14 13"><rect x="0.5" y="1" width="2.2" height="10.5" fill="#fde9c8" stroke="#f08a1e" stroke-width=".9"/><rect x="4" y="0.5" width="9" height="2.5" fill="#8a8a8a"/><path d="M4.5 3 L4.5 5 M12.5 3 L12.5 5" stroke="#8a8a8a"/><circle cx="9.3" cy="8.6" r="3.7" fill="#5aa0e8" stroke="#2d6fc0" stroke-width=".8"/></svg>
<div class="t" style="left:1165.30px;top:692.03px;font-size:10.6px;color:#1a1a1a;">Прямая со стрелкой 5</div>
<svg class="a" style="left:1147px;top:708px;" width="14" height="13" viewBox="0 0 14 13"><rect x="0.5" y="1" width="2.2" height="10.5" fill="#fde9c8" stroke="#f08a1e" stroke-width=".9"/><rect x="4" y="0.5" width="9" height="2.5" fill="#8a8a8a"/><path d="M4.5 3 L4.5 5 M12.5 3 L12.5 5" stroke="#8a8a8a"/><circle cx="9.3" cy="8.6" r="3.7" fill="#5aa0e8" stroke="#2d6fc0" stroke-width=".8"/></svg>
<div class="t" style="left:1165.30px;top:708.83px;font-size:10.6px;color:#1a1a1a;">Прямая со стрелкой 6</div>
<svg class="a" style="left:1147px;top:725px;" width="14" height="13" viewBox="0 0 14 13"><rect x="0.5" y="1" width="2.2" height="10.5" fill="#fde9c8" stroke="#f08a1e" stroke-width=".9"/><rect x="4" y="0.5" width="9" height="2.5" fill="#8a8a8a"/><path d="M4.5 3 L4.5 5 M12.5 3 L12.5 5" stroke="#8a8a8a"/><circle cx="9.3" cy="8.6" r="3.7" fill="#5aa0e8" stroke="#2d6fc0" stroke-width=".8"/></svg>
<div class="t" style="left:1165.30px;top:725.63px;font-size:10.6px;color:#1a1a1a;">Прямая со стрелкой 7</div>
<svg class="a" style="left:1147px;top:742px;" width="14" height="13" viewBox="0 0 14 13"><rect x="0.5" y="5" width="6.5" height="6.5" fill="#fff" stroke="#444" stroke-width=".9"/><circle cx="9" cy="4" r="3.6" fill="#fff" stroke="#444" stroke-width=".9"/><path d="M8 4.5 L12.5 9 L8 13 L3.5 9 Z" fill="#fff" stroke="#444" stroke-width=".9"/></svg>
<div class="t" style="left:1165.30px;top:742.43px;font-size:10.6px;color:#1a1a1a;">Picture 4</div>
<div class="a" style="left:1121px;top:761px;width:9px;height:8px;background:#fff;border:1px solid #c0c0c6;border-radius:1px"></div>
<div class="a" style="left:1123px;top:764px;width:5px;height:1px;background:#2a4aa0;"></div>
<svg class="a" style="left:1135px;top:758px;" width="9" height="12" viewBox="0 0 9 12"><path d="M0.5 0.5 L6 0.5 L8.5 3 L8.5 11.5 L0.5 11.5 Z" fill="#fff" stroke="#555" stroke-width=".9"/><path d="M6 0.5 L6 3 L8.5 3" fill="none" stroke="#555" stroke-width=".7"/><rect x="2" y="6" width="3" height="4" fill="#f6b84a"/><rect x="4" y="6.5" width="3" height="3" fill="none" stroke="#2d6fc0" stroke-width=".9"/></svg>
<div class="t" style="left:1149.50px;top:759.23px;font-size:10.6px;color:#1a1a1a;">Страница 6</div>
<svg class="a" style="left:1147px;top:775px;" width="14" height="13" viewBox="0 0 14 13"><rect x="0.5" y="1" width="2.2" height="10.5" fill="#fde9c8" stroke="#f08a1e" stroke-width=".9"/><rect x="4" y="0.5" width="9" height="2.5" fill="#8a8a8a"/><path d="M4.5 3 L4.5 5 M12.5 3 L12.5 5" stroke="#8a8a8a"/><circle cx="9.3" cy="8.6" r="3.7" fill="#5aa0e8" stroke="#2d6fc0" stroke-width=".8"/></svg>
<div class="t" style="left:1165.30px;top:776.03px;font-size:10.6px;color:#1a1a1a;">Текст 2</div>
<svg class="a" style="left:1147px;top:792px;" width="14" height="13" viewBox="0 0 14 13"><rect x="0.5" y="1" width="2.2" height="10.5" fill="#fde9c8" stroke="#f08a1e" stroke-width=".9"/><rect x="4" y="0.5" width="9" height="2.5" fill="#8a8a8a"/><path d="M4.5 3 L4.5 5 M12.5 3 L12.5 5" stroke="#8a8a8a"/><circle cx="9.3" cy="8.6" r="3.7" fill="#5aa0e8" stroke="#2d6fc0" stroke-width=".8"/></svg>
<div class="t" style="left:1165.30px;top:792.83px;font-size:10.6px;color:#1a1a1a;">Текст 2</div>
<svg class="a" style="left:1147px;top:809px;" width="14" height="13" viewBox="0 0 14 13"><rect x="0.5" y="5" width="6.5" height="6.5" fill="#fff" stroke="#444" stroke-width=".9"/><circle cx="9" cy="4" r="3.6" fill="#fff" stroke="#444" stroke-width=".9"/><path d="M8 4.5 L12.5 9 L8 13 L3.5 9 Z" fill="#fff" stroke="#444" stroke-width=".9"/></svg>
<div class="t" style="left:1165.30px;top:809.63px;font-size:10.6px;color:#1a1a1a;">Picture 2</div>
<div class="a" style="left:1121px;top:828px;width:9px;height:8px;background:#fff;border:1px solid #c0c0c6;border-radius:1px"></div>
<div class="a" style="left:1123px;top:832px;width:5px;height:1px;background:#2a4aa0;"></div>
<svg class="a" style="left:1135px;top:826px;" width="9" height="12" viewBox="0 0 9 12"><path d="M0.5 0.5 L6 0.5 L8.5 3 L8.5 11.5 L0.5 11.5 Z" fill="#fff" stroke="#555" stroke-width=".9"/><path d="M6 0.5 L6 3 L8.5 3" fill="none" stroke="#555" stroke-width=".7"/><rect x="2" y="6" width="3" height="4" fill="#f6b84a"/><rect x="4" y="6.5" width="3" height="3" fill="none" stroke="#2d6fc0" stroke-width=".9"/></svg>
<div class="t" style="left:1149.50px;top:826.43px;font-size:10.6px;color:#1a1a1a;">Страница 7</div>
<svg class="a" style="left:1147px;top:842px;" width="14" height="13" viewBox="0 0 14 13"><rect x="0.5" y="1" width="2.2" height="10.5" fill="#fde9c8" stroke="#f08a1e" stroke-width=".9"/><rect x="4" y="0.5" width="9" height="2.5" fill="#8a8a8a"/><path d="M4.5 3 L4.5 5 M12.5 3 L12.5 5" stroke="#8a8a8a"/><circle cx="9.3" cy="8.6" r="3.7" fill="#5aa0e8" stroke="#2d6fc0" stroke-width=".8"/></svg>
<div class="t" style="left:1165.30px;top:843.23px;font-size:10.6px;color:#1a1a1a;">Текст 2</div>
<svg class="a" style="left:1147px;top:859px;" width="14" height="13" viewBox="0 0 14 13"><rect x="0.5" y="1" width="2.2" height="10.5" fill="#fde9c8" stroke="#f08a1e" stroke-width=".9"/><rect x="4" y="0.5" width="9" height="2.5" fill="#8a8a8a"/><path d="M4.5 3 L4.5 5 M12.5 3 L12.5 5" stroke="#8a8a8a"/><circle cx="9.3" cy="8.6" r="3.7" fill="#5aa0e8" stroke="#2d6fc0" stroke-width=".8"/></svg>
<div class="t" style="left:1165.30px;top:860.03px;font-size:10.6px;color:#1a1a1a;">Текст 2</div>
<svg class="a" style="left:1147px;top:876px;" width="14" height="13" viewBox="0 0 14 13"><rect x="0.5" y="5" width="6.5" height="6.5" fill="#fff" stroke="#444" stroke-width=".9"/><circle cx="9" cy="4" r="3.6" fill="#fff" stroke="#444" stroke-width=".9"/><path d="M8 4.5 L12.5 9 L8 13 L3.5 9 Z" fill="#fff" stroke="#444" stroke-width=".9"/></svg>
<div class="t" style="left:1165.30px;top:876.83px;font-size:10.6px;color:#1a1a1a;">Рисунок 10</div>
<svg class="a" style="left:1147px;top:893px;" width="14" height="13" viewBox="0 0 14 13"><rect x="0.5" y="5" width="6.5" height="6.5" fill="#fff" stroke="#444" stroke-width=".9"/><circle cx="9" cy="4" r="3.6" fill="#fff" stroke="#444" stroke-width=".9"/><path d="M8 4.5 L12.5 9 L8 13 L3.5 9 Z" fill="#fff" stroke="#444" stroke-width=".9"/></svg>
<div class="t" style="left:1165.30px;top:893.63px;font-size:10.6px;color:#1a1a1a;">Рисунок 12</div>
<svg class="a" style="left:1147px;top:910px;" width="14" height="13" viewBox="0 0 14 13"><rect x="0.5" y="5" width="6.5" height="6.5" fill="#fff" stroke="#444" stroke-width=".9"/><circle cx="9" cy="4" r="3.6" fill="#fff" stroke="#444" stroke-width=".9"/><path d="M8 4.5 L12.5 9 L8 13 L3.5 9 Z" fill="#fff" stroke="#444" stroke-width=".9"/></svg>
<div class="t" style="left:1165.30px;top:910.43px;font-size:10.6px;color:#1a1a1a;">Picture 10</div>
<div class="a" style="left:1135px;top:929px;width:9px;height:2px;background:#888;"></div>
<div class="a" style="left:1367px;top:336px;width:15px;height:607px;background:#fff;"></div>
<div class="a" style="left:1374px;top:351px;width:2px;height:375px;background:#8a8a8c;border-radius:1px"></div>
<div class="a" style="left:1120px;top:926px;width:262px;height:17px;background:#fafafa;"></div>
<div class="a" style="left:1135px;top:932px;width:175px;height:2px;background:#8a8a8c;border-radius:1px"></div>
<div class="a" style="left:1119.5px;top:946.5px;width:263px;height:19px;background:#fff;border:1px solid #a8a8ac"></div>
<div class="a" style="left:1366px;top:947px;width:1px;height:18px;background:#d4d4d8;"></div>
<svg class="a" style="left:1369px;top:953px;" width="9" height="5" viewBox="0 0 9 5"><path d="M0.5 0.5 L4.5 4.5 L8.5 0.5" fill="none" stroke="#555"/></svg>
<div class="t" style="left:1121.50px;top:950.61px;font-size:10.5px;color:#1a1a1a;">Бізнес-ідея</div>
<div class="a" style="left:1389px;top:381px;width:24px;height:25px;background:#d6e7f8;border:1px solid #c0d8f0;border-radius:2px"></div>
<svg class="a" style="left:1393px;top:309px;" width="17" height="15" viewBox="0 0 17 15"><rect x="0.5" y="0.5" width="16" height="14" fill="#fff" stroke="#444"/><rect x="0.5" y="0.5" width="16" height="2.5" fill="#555"/><path d="M3 7 L14 7 M3 10.5 L14 10.5" stroke="#2d6fc0"/><path d="M10 5.5 L10 8.5 M6 9 L6 12" stroke="#2d6fc0" stroke-width="1.3"/></svg>
<svg class="a" style="left:1393px;top:335px;" width="17" height="16" viewBox="0 0 17 16"><text x="6" y="12" font-size="15" text-anchor="middle" fill="#333" font-family="Liberation Sans">A</text><path d="M16 5 L9 12" stroke="#555" stroke-width="1.3"/><path d="M9 11 Q6 12 6 16 Q10 15 10.5 12.5 Z" fill="#5aa0e8"/></svg>
<svg class="a" style="left:1393px;top:359px;" width="17" height="16" viewBox="0 0 17 16"><path d="M0.5 2 L0.5 14.5 L16 14.5 L16 4 L7 4 L5.5 2 Z" fill="#fde3b0" stroke="#f09a2a"/><rect x="6.5" y="7" width="10" height="8" fill="#fff" stroke="#2d5a8a"/><path d="M7 15 L10.5 10 L13 12.5 L16.5 9.5 L16.5 15 Z" fill="#2d8fd6"/></svg>
<svg class="a" style="left:1393px;top:385px;" width="17" height="16" viewBox="0 0 17 16"><circle cx="8.5" cy="8" r="7.5" fill="#fff" stroke="#444" stroke-width="1.1"/><path d="M12 4 L9.5 9 L5 12 L7.5 7 Z" fill="#2d8fd6"/></svg>
<svg class="a" style="left:1393px;top:412px;" width="17" height="15" viewBox="0 0 14 13"><rect x="0.5" y="5" width="6.5" height="6.5" fill="#fff" stroke="#444" stroke-width=".9"/><circle cx="9" cy="4" r="3.6" fill="#fff" stroke="#444" stroke-width=".9"/><path d="M8 4.5 L12.5 9 L8 13 L3.5 9 Z" fill="#fff" stroke="#444" stroke-width=".9"/></svg>
<svg class="a" style="left:1393px;top:439px;" width="17" height="13" viewBox="0 0 17 13"><rect x="7.5" y="0.5" width="9" height="12" fill="#fff" stroke="#444"/><path d="M7.5 2.5 L16.5 2.5" stroke="#2d6fc0" stroke-width="1.2"/><path d="M1 3 L5 3 M0 6.5 L5 6.5 M1 10 L5 10" stroke="#f09a2a"/></svg>
<svg class="a" style="left:1393px;top:463px;" width="17" height="13" viewBox="0 0 17 13"><path d="M6 0.5 L7.5 4.5 L11.5 4.5 L8.5 7 L9.5 11.5 L6 9 L2.5 11.5 L3.5 7 L0.5 4.5 L4.5 4.5 Z" fill="#f8b040" stroke="#e07820" stroke-width=".7"/><path d="M11 5 L16 5 M11 8 L16 8 M10 11 L16 11" stroke="#f09a2a"/></svg>
<svg class="a" style="left:1393px;top:488px;" width="17" height="14" viewBox="0 0 17 14"><rect x="0.5" y="0.5" width="16" height="13" fill="#2d7cc6" stroke="#1b4f8a"/><rect x="2.5" y="4" width="12" height="5" fill="#8ccaf2"/></svg><div class="a" style="left:1438px;top:61px;width:477px;height:953px;background:#fff;border-radius:9px"></div>
<div class="a" style="left:1443px;top:66px;width:467px;height:55px;background:#eff2f5;border-radius:5px 5px 0 0"></div>
<div class="t" style="left:1581.50px;top:86.46px;font-size:16px;color:#1f1f2a;font-weight:bold;">Participants (10)</div>
<svg class="a" style="left:1845px;top:83px;" width="19" height="19" viewBox="0 0 19 19"><path d="M8 2 L4.5 2 Q2 2 2 4.5 L2 14.5 Q2 17 4.5 17 L14.5 17 Q17 17 17 14.5 L17 11" fill="none" stroke="#6f7680" stroke-width="2.2"/><path d="M9 10 L16.5 2.5 M11 2 L17 2 L17 8" fill="none" stroke="#6f7680" stroke-width="2.2"/></svg>
<svg class="a" style="left:1880px;top:86px;" width="14" height="14" viewBox="0 0 14 14"><path d="M1 1 L13 13 M13 1 L1 13" stroke="#6f7680" stroke-width="1.4"/></svg>
<div class="a" style="left:1466px;top:134px;width:423px;height:40px;background:#fff;border:1px solid #b8b4cc;border-radius:8px"></div>
<svg class="a" style="left:1481px;top:146px;" width="16" height="16" viewBox="0 0 16 16"><circle cx="6.8" cy="6.8" r="5.6" fill="none" stroke="#5c5c6e" stroke-width="1.5"/><path d="M11 11 L15 15" stroke="#5c5c6e" stroke-width="1.6"/></svg>
<div class="t" style="left:1501.90px;top:145.28px;font-size:15.5px;color:#6b6b7e;">Find a participant</div>
<div class="a" style="left:1469.5px;top:186px;width:34px;height:34px;border-radius:9px;overflow:hidden;background:#ebe6dc"><div class="a" style="left:6px;top:3px;width:24px;height:30px;background:#caa56e;border-radius:50% 50% 30% 30%"></div><div class="a" style="left:11px;top:7px;width:13px;height:17px;background:#e8c2aa;border-radius:50%"></div><div class="a" style="left:5px;top:26px;width:26px;height:10px;background:#f0d8d0;border-radius:40% 40% 0 0"></div></div>
<div class="t" style="left:1518.30px;top:196.29px;font-size:15.6px;color:#232333;">Дворник Інна (Host, me)</div>
<svg class="a" style="left:1843px;top:193px;" width="13" height="19" viewBox="0 0 13 19"><path d="M3.5 3 Q3.5 0.8 6.5 0.8 Q9.5 0.8 9.5 3 L9.5 9.5 Q9.5 12 6.5 12 Q3.5 12 3.5 9.5 Z" fill="none" stroke="#6e6e80" stroke-width="1.3"/><path d="M0.8 8.5 Q0.8 15 6.5 15 Q12.2 15 12.2 8.5 M6.5 15 L6.5 18 M3.5 18 L9.5 18" fill="none" stroke="#6e6e80" stroke-width="1.3"/></svg>
<svg class="a" style="left:1868.5px;top:195.5px;" width="21" height="14" viewBox="0 0 21 14"><path d="M1 2.5 Q1 1 2.5 1 L12.5 1 Q14 1 14 2.5 L14 11.5 Q14 13 12.5 13 L2.5 13 Q1 13 1 11.5 Z" fill="none" stroke="#6e6e80" stroke-width="1.3"/><path d="M14 5 L20 2 L20 12 L14 9" fill="none" stroke="#6e6e80" stroke-width="1.3"/></svg>
<div class="a" style="left:1469.5px;top:237px;width:34px;height:34px;border-radius:9px;overflow:hidden;background:#d8d2ca"><div class="a" style="left:0px;top:8px;width:9px;height:26px;background:#3060b0;"></div><div class="a" style="left:7px;top:4px;width:27px;height:32px;background:#ebe7e3;border-radius:45% 45% 20% 20%"></div><div class="a" style="left:12px;top:12px;width:3px;height:3px;background:#555;border-radius:50%"></div><div class="a" style="left:21px;top:12px;width:3px;height:3px;background:#555;border-radius:50%"></div></div>
<div class="t" style="left:1518.30px;top:247.29px;font-size:15.6px;color:#232333;">Кіріл Одосовський</div>
<div class="a" style="left:1809px;top:245px;width:20px;height:15px;background:#12a53a;border-radius:2px"></div>
<svg class="a" style="left:1814px;top:247px;" width="10" height="10" viewBox="0 0 10 10"><path d="M5 9.5 L5 2 M1.5 5 L5 1.2 L8.5 5" fill="none" stroke="#fff" stroke-width="1.8"/></svg>
<svg class="a" style="left:1843px;top:244px;" width="13" height="19" viewBox="0 0 13 19"><path d="M3.5 3 Q3.5 0.8 6.5 0.8 Q9.5 0.8 9.5 3 L9.5 9.5 Q9.5 12 6.5 12 Q3.5 12 3.5 9.5 Z" fill="#6e6e80"/><path d="M0.8 8.5 Q0.8 15 6.5 15 Q12.2 15 12.2 8.5 M6.5 15 L6.5 18 M3.5 18 L9.5 18" fill="none" stroke="#6e6e80" stroke-width="1.3"/></svg>
<svg class="a" style="left:1868.5px;top:244px;" width="21" height="21" viewBox="0 0 21 21"><path d="M1.5 6.5 Q1.5 5 3 5 L13 5 Q14.5 5 14.5 6.5 L14.5 15 Q14.5 16.5 13 16.5 L3 16.5 Q1.5 16.5 1.5 15 Z" fill="none" stroke="#e3323d" stroke-width="1.2"/><path d="M14.5 9 L19.5 6 L19.5 15.5 L14.5 12.5" fill="none" stroke="#e3323d" stroke-width="1.2"/><path d="M0.5 20 L20 0.5" stroke="#e3323d" stroke-width="1.3"/></svg>
<div class="a" style="left:1469.5px;top:288px;width:34px;height:34px;border-radius:9px;overflow:hidden;background:linear-gradient(180deg,#2a4228 0,#34502e 55%,#8a8680 70%,#a8a29c 100%)"><div class="a" style="left:20px;top:0px;width:14px;height:22px;background:#7a5a38;border-radius:40%"></div><div class="a" style="left:14px;top:12px;width:8px;height:9px;background:#c8a890;border-radius:50%"></div><div class="a" style="left:13px;top:10px;width:10px;height:4px;background:#5a3a2a;border-radius:50% 50% 0 0"></div><div class="a" style="left:9px;top:20px;width:18px;height:16px;background:#ece8e2;border-radius:30% 30% 0 0"></div><div class="a" style="left:15px;top:21px;width:6px;height:15px;background:#151515;"></div></div>
<div class="t" style="left:1518.30px;top:298.29px;font-size:15.6px;color:#232333;">Oleg Prostantinov</div>
<svg class="a" style="left:1838.5px;top:295px;" width="21" height="21" viewBox="0 0 21 21"><path d="M8 3 Q8 0.8 10.5 0.8 Q13 0.8 13 3 L13 10 Q13 12.2 10.5 12.2 Q8 12.2 8 10 Z" fill="none" stroke="#e3323d" stroke-width="1.2"/><path d="M5.5 9 Q5.5 15 10.5 15 Q15.5 15 15.5 9 M10.5 15 L10.5 18.5 M7.5 18.5 L13.5 18.5" fill="none" stroke="#e3323d" stroke-width="1.2"/><path d="M1 20 L20 1" stroke="#e3323d" stroke-width="1.3"/></svg>
<svg class="a" style="left:1868.5px;top:295px;" width="21" height="21" viewBox="0 0 21 21"><path d="M1.5 6.5 Q1.5 5 3 5 L13 5 Q14.5 5 14.5 6.5 L14.5 15 Q14.5 16.5 13 16.5 L3 16.5 Q1.5 16.5 1.5 15 Z" fill="none" stroke="#e3323d" stroke-width="1.2"/><path d="M14.5 9 L19.5 6 L19.5 15.5 L14.5 12.5" fill="none" stroke="#e3323d" stroke-width="1.2"/><path d="M0.5 20 L20 0.5" stroke="#e3323d" stroke-width="1.3"/></svg>
<div class="a" style="left:1469.5px;top:339px;width:34px;height:34px;border-radius:9px;overflow:hidden;background:linear-gradient(180deg,#c4c8cc 0,#b8bcb8 30%,#8aa058 48%,#6a8a3c 100%)"><div class="a" style="left:7px;top:5px;width:20px;height:8px;background:#4a4a48;border-radius:50% 50% 10% 10%"></div><div class="a" style="left:10px;top:11px;width:15px;height:17px;background:#d0a08a;border-radius:45%"></div><div class="a" style="left:13px;top:22px;width:9px;height:5px;background:#5a4030;border-radius:50%"></div><div class="a" style="left:2px;top:27px;width:22px;height:9px;background:#d03030;border-radius:40% 40% 0 0"></div></div>
<div class="t" style="left:1518.30px;top:349.29px;font-size:15.6px;color:#232333;">Андрій Павлюк</div>
<svg class="a" style="left:1838.5px;top:346px;" width="21" height="21" viewBox="0 0 21 21"><path d="M8 3 Q8 0.8 10.5 0.8 Q13 0.8 13 3 L13 10 Q13 12.2 10.5 12.2 Q8 12.2 8 10 Z" fill="none" stroke="#e3323d" stroke-width="1.2"/><path d="M5.5 9 Q5.5 15 10.5 15 Q15.5 15 15.5 9 M10.5 15 L10.5 18.5 M7.5 18.5 L13.5 18.5" fill="none" stroke="#e3323d" stroke-width="1.2"/><path d="M1 20 L20 1" stroke="#e3323d" stroke-width="1.3"/></svg>
<svg class="a" style="left:1868.5px;top:346px;" width="21" height="21" viewBox="0 0 21 21"><path d="M1.5 6.5 Q1.5 5 3 5 L13 5 Q14.5 5 14.5 6.5 L14.5 15 Q14.5 16.5 13 16.5 L3 16.5 Q1.5 16.5 1.5 15 Z" fill="none" stroke="#e3323d" stroke-width="1.2"/><path d="M14.5 9 L19.5 6 L19.5 15.5 L14.5 12.5" fill="none" stroke="#e3323d" stroke-width="1.2"/><path d="M0.5 20 L20 0.5" stroke="#e3323d" stroke-width="1.3"/></svg>
<div class="a" style="left:1469.5px;top:390px;width:34px;height:34px;border-radius:9px;overflow:hidden;background:linear-gradient(90deg,#b8702e,#a86028 50%,#b87838)"><div class="a" style="left:8px;top:1px;width:19px;height:10px;background:#3a2818;border-radius:50% 50% 20% 20%"></div><div class="a" style="left:6px;top:7px;width:22px;height:25px;background:#e2b09e;border-radius:45% 45% 50% 50%"></div><div class="a" style="left:6px;top:29px;width:22px;height:7px;background:#7a4a30;"></div></div>
<div class="t" style="left:1518.30px;top:400.29px;font-size:15.6px;color:#232333;">Грудина Станіслав</div>
<svg class="a" style="left:1838.5px;top:397px;" width="21" height="21" viewBox="0 0 21 21"><path d="M8 3 Q8 0.8 10.5 0.8 Q13 0.8 13 3 L13 10 Q13 12.2 10.5 12.2 Q8 12.2 8 10 Z" fill="none" stroke="#e3323d" stroke-width="1.2"/><path d="M5.5 9 Q5.5 15 10.5 15 Q15.5 15 15.5 9 M10.5 15 L10.5 18.5 M7.5 18.5 L13.5 18.5" fill="none" stroke="#e3323d" stroke-width="1.2"/><path d="M1 20 L20 1" stroke="#e3323d" stroke-width="1.3"/></svg>
<svg class="a" style="left:1868.5px;top:397px;" width="21" height="21" viewBox="0 0 21 21"><path d="M1.5 6.5 Q1.5 5 3 5 L13 5 Q14.5 5 14.5 6.5 L14.5 15 Q14.5 16.5 13 16.5 L3 16.5 Q1.5 16.5 1.5 15 Z" fill="none" stroke="#e3323d" stroke-width="1.2"/><path d="M14.5 9 L19.5 6 L19.5 15.5 L14.5 12.5" fill="none" stroke="#e3323d" stroke-width="1.2"/><path d="M0.5 20 L20 0.5" stroke="#e3323d" stroke-width="1.3"/></svg>
<div class="a" style="left:1469.5px;top:441px;width:34px;height:34px;border-radius:9px;overflow:hidden;background:#b8b4ac"><div class="a" style="left:9px;top:2px;width:16px;height:8px;background:#8a6a50;border-radius:50% 50% 0 0"></div><div class="a" style="left:8px;top:6px;width:18px;height:24px;background:#d8b8a4;border-radius:45%"></div><div class="a" style="left:5px;top:28px;width:24px;height:8px;background:#5a5450;"></div></div>
<div class="t" style="left:1518.30px;top:451.29px;font-size:15.6px;color:#232333;">Дмитро Собіцький</div>
<svg class="a" style="left:1838.5px;top:448px;" width="21" height="21" viewBox="0 0 21 21"><path d="M8 3 Q8 0.8 10.5 0.8 Q13 0.8 13 3 L13 10 Q13 12.2 10.5 12.2 Q8 12.2 8 10 Z" fill="none" stroke="#e3323d" stroke-width="1.2"/><path d="M5.5 9 Q5.5 15 10.5 15 Q15.5 15 15.5 9 M10.5 15 L10.5 18.5 M7.5 18.5 L13.5 18.5" fill="none" stroke="#e3323d" stroke-width="1.2"/><path d="M1 20 L20 1" stroke="#e3323d" stroke-width="1.3"/></svg>
<svg class="a" style="left:1868.5px;top:448px;" width="21" height="21" viewBox="0 0 21 21"><path d="M1.5 6.5 Q1.5 5 3 5 L13 5 Q14.5 5 14.5 6.5 L14.5 15 Q14.5 16.5 13 16.5 L3 16.5 Q1.5 16.5 1.5 15 Z" fill="none" stroke="#e3323d" stroke-width="1.2"/><path d="M14.5 9 L19.5 6 L19.5 15.5 L14.5 12.5" fill="none" stroke="#e3323d" stroke-width="1.2"/><path d="M0.5 20 L20 0.5" stroke="#e3323d" stroke-width="1.3"/></svg>
<svg class="a" style="left:1472.5px;top:495px;" width="29" height="29" viewBox="0 0 29 29"><polygon points="8.5,0.5 20.5,0.5 28.5,8.5 28.5,20.5 20.5,28.5 8.5,28.5 0.5,20.5 0.5,8.5" fill="#d8262f"/><polygon points="9.5,2.5 19.5,2.5 26.5,9.5 26.5,19.5 19.5,26.5 9.5,26.5 2.5,19.5 2.5,9.5" fill="none" stroke="#fff" stroke-width=".8"/><text x="14.5" y="13.5" text-anchor="middle" font-family="Liberation Sans" font-weight="bold" font-size="6.5" fill="#fff">HOT</text><text x="14.5" y="21" text-anchor="middle" font-family="Liberation Sans" font-weight="bold" font-size="6.5" fill="#fff">STOP</text></svg>
<div class="t" style="left:1518.30px;top:502.29px;font-size:15.6px;color:#232333;">Іван Балаба</div>
<svg class="a" style="left:1838.5px;top:499px;" width="21" height="21" viewBox="0 0 21 21"><path d="M8 3 Q8 0.8 10.5 0.8 Q13 0.8 13 3 L13 10 Q13 12.2 10.5 12.2 Q8 12.2 8 10 Z" fill="none" stroke="#e3323d" stroke-width="1.2"/><path d="M5.5 9 Q5.5 15 10.5 15 Q15.5 15 15.5 9 M10.5 15 L10.5 18.5 M7.5 18.5 L13.5 18.5" fill="none" stroke="#e3323d" stroke-width="1.2"/><path d="M1 20 L20 1" stroke="#e3323d" stroke-width="1.3"/></svg>
<svg class="a" style="left:1868.5px;top:499px;" width="21" height="21" viewBox="0 0 21 21"><path d="M1.5 6.5 Q1.5 5 3 5 L13 5 Q14.5 5 14.5 6.5 L14.5 15 Q14.5 16.5 13 16.5 L3 16.5 Q1.5 16.5 1.5 15 Z" fill="none" stroke="#e3323d" stroke-width="1.2"/><path d="M14.5 9 L19.5 6 L19.5 15.5 L14.5 12.5" fill="none" stroke="#e3323d" stroke-width="1.2"/><path d="M0.5 20 L20 0.5" stroke="#e3323d" stroke-width="1.3"/></svg>
<div class="a" style="left:1469.5px;top:543px;width:34px;height:34px;border-radius:9px;overflow:hidden;background:#1e1a18"><div class="a" style="left:9px;top:4px;width:16px;height:8px;background:#1a1410;border-radius:50% 50% 0 0"></div><div class="a" style="left:9px;top:7px;width:16px;height:21px;background:#c09a88;border-radius:45%"></div><div class="a" style="left:4px;top:27px;width:26px;height:9px;background:#2a2a34;border-radius:40% 40% 0 0"></div></div>
<div class="t" style="left:1518.30px;top:553.29px;font-size:15.6px;color:#232333;">Кіріл Одосовський</div>
<svg class="a" style="left:1838.5px;top:550px;" width="21" height="21" viewBox="0 0 21 21"><path d="M8 3 Q8 0.8 10.5 0.8 Q13 0.8 13 3 L13 10 Q13 12.2 10.5 12.2 Q8 12.2 8 10 Z" fill="none" stroke="#e3323d" stroke-width="1.2"/><path d="M5.5 9 Q5.5 15 10.5 15 Q15.5 15 15.5 9 M10.5 15 L10.5 18.5 M7.5 18.5 L13.5 18.5" fill="none" stroke="#e3323d" stroke-width="1.2"/><path d="M1 20 L20 1" stroke="#e3323d" stroke-width="1.3"/></svg>
<svg class="a" style="left:1868.5px;top:550px;" width="21" height="21" viewBox="0 0 21 21"><path d="M1.5 6.5 Q1.5 5 3 5 L13 5 Q14.5 5 14.5 6.5 L14.5 15 Q14.5 16.5 13 16.5 L3 16.5 Q1.5 16.5 1.5 15 Z" fill="none" stroke="#e3323d" stroke-width="1.2"/><path d="M14.5 9 L19.5 6 L19.5 15.5 L14.5 12.5" fill="none" stroke="#e3323d" stroke-width="1.2"/><path d="M0.5 20 L20 0.5" stroke="#e3323d" stroke-width="1.3"/></svg>
<div class="a" style="left:1469.5px;top:594px;width:34px;height:34px;border-radius:9px;overflow:hidden;background:#4a7a3a"><div class="a" style="left:2px;top:12px;width:14px;height:16px;background:#d8b098;border-radius:45%"></div><div class="a" style="left:17px;top:8px;width:15px;height:18px;background:#b88a70;border-radius:45%"></div><div class="a" style="left:0px;top:26px;width:34px;height:10px;background:#c8b048;"></div></div>
<div class="t" style="left:1518.30px;top:604.29px;font-size:15.6px;color:#232333;">Сергій Колесник</div>
<svg class="a" style="left:1838.5px;top:601px;" width="21" height="21" viewBox="0 0 21 21"><path d="M8 3 Q8 0.8 10.5 0.8 Q13 0.8 13 3 L13 10 Q13 12.2 10.5 12.2 Q8 12.2 8 10 Z" fill="none" stroke="#e3323d" stroke-width="1.2"/><path d="M5.5 9 Q5.5 15 10.5 15 Q15.5 15 15.5 9 M10.5 15 L10.5 18.5 M7.5 18.5 L13.5 18.5" fill="none" stroke="#e3323d" stroke-width="1.2"/><path d="M1 20 L20 1" stroke="#e3323d" stroke-width="1.3"/></svg>
<svg class="a" style="left:1868.5px;top:601px;" width="21" height="21" viewBox="0 0 21 21"><path d="M1.5 6.5 Q1.5 5 3 5 L13 5 Q14.5 5 14.5 6.5 L14.5 15 Q14.5 16.5 13 16.5 L3 16.5 Q1.5 16.5 1.5 15 Z" fill="none" stroke="#e3323d" stroke-width="1.2"/><path d="M14.5 9 L19.5 6 L19.5 15.5 L14.5 12.5" fill="none" stroke="#e3323d" stroke-width="1.2"/><path d="M0.5 20 L20 0.5" stroke="#e3323d" stroke-width="1.3"/></svg>
<div class="a" style="left:1469.5px;top:645px;width:34px;height:34px;border-radius:9px;overflow:hidden;background:#e6e6e6"><div class="a" style="left:8px;top:2px;width:18px;height:8px;background:#2a2a2a;border-radius:50% 50% 0 0"></div><div class="a" style="left:8px;top:6px;width:18px;height:22px;background:#d0a890;border-radius:45%"></div><div class="a" style="left:2px;top:26px;width:30px;height:10px;background:#1e1e1e;border-radius:40% 40% 0 0"></div></div>
<div class="t" style="left:1518.30px;top:655.29px;font-size:15.6px;color:#232333;">Стрілець Дмитро</div>
<svg class="a" style="left:1838.5px;top:652px;" width="21" height="21" viewBox="0 0 21 21"><path d="M8 3 Q8 0.8 10.5 0.8 Q13 0.8 13 3 L13 10 Q13 12.2 10.5 12.2 Q8 12.2 8 10 Z" fill="none" stroke="#e3323d" stroke-width="1.2"/><path d="M5.5 9 Q5.5 15 10.5 15 Q15.5 15 15.5 9 M10.5 15 L10.5 18.5 M7.5 18.5 L13.5 18.5" fill="none" stroke="#e3323d" stroke-width="1.2"/><path d="M1 20 L20 1" stroke="#e3323d" stroke-width="1.3"/></svg>
<svg class="a" style="left:1868.5px;top:652px;" width="21" height="21" viewBox="0 0 21 21"><path d="M1.5 6.5 Q1.5 5 3 5 L13 5 Q14.5 5 14.5 6.5 L14.5 15 Q14.5 16.5 13 16.5 L3 16.5 Q1.5 16.5 1.5 15 Z" fill="none" stroke="#e3323d" stroke-width="1.2"/><path d="M14.5 9 L19.5 6 L19.5 15.5 L14.5 12.5" fill="none" stroke="#e3323d" stroke-width="1.2"/><path d="M0.5 20 L20 0.5" stroke="#e3323d" stroke-width="1.3"/></svg>
<div class="a" style="left:1514.5px;top:962.5px;width:40px;height:28px;background:#fff;border:1px solid #b8b8c0;border-radius:7px"></div>
<div class="a" style="left:1528.5px;top:970px;width:2px;height:13px;background:#ff6a00;"></div>
<div class="a" style="left:1795px;top:962.5px;width:42px;height:28px;background:#fff;border:1px solid #b8b8c0;border-radius:7px"></div>
<svg class="a" style="left:1820px;top:975px;" width="13" height="3" viewBox="0 0 13 3"><circle cx="1.5" cy="1.5" r="1.4" fill="#222"/><circle cx="6.5" cy="1.5" r="1.4" fill="#222"/><circle cx="11.5" cy="1.5" r="1.4" fill="#222"/></svg>
<div class="a" style="left:1530.5px;top:886.5px;width:289px;height:118px;background:#f9f9f9;border:1px solid #e4e4e4;border-radius:7px;box-shadow:0 2px 6px rgba(0,0,0,.15)"></div>
<div class="t" style="left:1542.00px;top:898.77px;font-size:14.8px;color:#1b1b1b;">українська</div>
<div class="t" style="left:1542.00px;top:918.60px;font-size:15px;color:#1b1b1b;">Українська (розширена)</div>
<div class="t" style="left:1542.00px;top:958.60px;font-size:15px;color:#1b1b1b;">Щоб змінити метод вводу, натисніть</div>
<div class="t" style="left:1542.00px;top:978.10px;font-size:15px;color:#1b1b1b;">сполучення клавіш Windows + пробіл.</div><div class="a" style="left:0px;top:1019px;width:1920px;height:1px;background:#050505;"></div>
<div class="a" style="left:0px;top:1020px;width:1920px;height:60px;background:linear-gradient(90deg,#e0e8f4 0,#dbe5f6 20%,#d6e0f6 38%,#d9ddf0 62%,#dde1f1 80%,#dfe5f2 100%);"></div>
<svg class="a" style="left:26px;top:1036px;" width="29" height="29" viewBox="0 0 29 29"><defs><linearGradient id="wg" x1="0" y1="0" x2="1" y2="1"><stop offset="0" stop-color="#4fc8f8"/><stop offset="1" stop-color="#0a6fd0"/></linearGradient></defs><path d="M2 0 L13.8 0 L13.8 13.8 L0 13.8 L0 2 Q0 0 2 0 Z" fill="url(#wg)"/><path d="M15.2 0 L27 0 Q29 0 29 2 L29 13.8 L15.2 13.8 Z" fill="url(#wg)"/><path d="M0 15.2 L13.8 15.2 L13.8 29 L2 29 Q0 29 0 27 Z" fill="url(#wg)"/><path d="M15.2 15.2 L29 15.2 L29 27 Q29 29 27 29 L15.2 29 Z" fill="url(#wg)"/></svg>
<svg class="a" style="left:83px;top:1036px;" width="28" height="28" viewBox="0 0 28 28"><circle cx="11.5" cy="11.5" r="9.5" fill="none" stroke="#1e1e1e" stroke-width="2.6"/><path d="M18.5 18.5 L26 26" stroke="#1e1e1e" stroke-width="3" stroke-linecap="round"/></svg>
<svg class="a" style="left:137px;top:1035px;" width="30" height="30" viewBox="0 0 30 30"><defs><linearGradient id="eg" x1="0" y1="0" x2="1" y2="0.6"><stop offset="0" stop-color="#1b9de2"/><stop offset=".6" stop-color="#2ec0d0"/><stop offset="1" stop-color="#5ad85a"/></linearGradient></defs><circle cx="15" cy="15" r="15" fill="url(#eg)"/><path d="M2 22 Q6 31 17 30 Q26 29 29 22 Q24 26 18 24 Q12 22 14 17 Q16 13 21 14 Q14 6 7 11 Q1 16 2 22 Z" fill="#0c59a4"/><circle cx="18.5" cy="17" r="4" fill="#e8f0f8" opacity="0"/></svg>
<svg class="a" style="left:191px;top:1036px;" width="31" height="28" viewBox="0 0 31 28"><path d="M0 2 Q0 0 2 0 L9 0 L12 3 L29 3 Q31 3 31 5 L31 27 L0 27 Z" fill="#f0b418"/><rect x="0" y="6" width="31" height="21.5" rx="1.5" fill="#fdd35a"/><rect x="5" y="19" width="21" height="9" rx="1.5" fill="#1f84d8"/><rect x="9" y="22" width="13" height="1.5" fill="#0c4a8a"/></svg>
<div class="a" style="left:242px;top:1026px;width:44px;height:48px;background:#f0f4fb;border-radius:6px"></div>
<div class="a" style="left:238px;top:1026px;width:43px;height:48px;background:#f6f8fc;border:1px solid #e2e8f2;border-radius:6px"></div>
<svg class="a" style="left:247px;top:1034px;" width="30" height="30" viewBox="0 0 30 30"><path d="M15 0.5 Q29.5 0.5 29.5 15 Q29.5 29.5 15 29.5 Q0.5 29.5 0.5 15 Q0.5 0.5 15 0.5 Z" fill="#0b5cff"/><text x="15" y="17.5" text-anchor="middle" font-family="Liberation Sans" font-size="7.5" fill="#fff">zoom</text></svg>
<div class="a" style="left:252px;top:1070px;width:20px;height:4px;background:#0a64d0;border-radius:2px"></div>
<svg class="a" style="left:302px;top:1035px;" width="30" height="30" viewBox="0 0 30 30"><circle cx="15" cy="15" r="15" fill="#db3a2e"/><path d="M15 15 L2 22.5 A15 15 0 0 0 21 28.7 Z" fill="#1e9a46"/><path d="M15 15 L21 28.7 A15 15 0 0 0 28 7.5 L15 7.5 Z" fill="#f8c418"/><path d="M15 15 L2 22.5 A15 15 0 0 1 2 7.5 L15 7.5 Z" fill="#db3a2e"/><circle cx="15" cy="15" r="7" fill="#fff"/><circle cx="15" cy="15" r="5.6" fill="#1c73e8"/></svg>
<svg class="a" style="left:357px;top:1035px;" width="30" height="31" viewBox="0 0 30 31"><path d="M15 1 Q28 1 29 12 Q30 22 22 25 L14 27 L10 31 L10 26 Q1 24 1 14 Q1 1 15 1 Z" fill="#7d5fd8"/><path d="M15 3.5 Q26 3.5 26.5 12.5 Q27 21 19.5 23 L12 24 L10.5 26 L10.5 23.5 Q4 22 4 13.5 Q4 3.5 15 3.5 Z" fill="#fff" opacity=".0"/><path d="M9 8 Q10.5 7 11.5 8 L13 10.5 Q13.5 12 12 12.5 Q12.5 15.5 16 17.5 Q17 16 18.5 16.5 L21 18 Q22 19 21 20.5 Q19 22.5 15 20 Q9 16 8 11 Q8 9 9 8 Z" fill="#fff"/><path d="M16 6.5 Q21 7 22 12 M16 9 Q19 9.5 19.5 12" fill="none" stroke="#fff" stroke-width="1.2"/></svg>
<svg class="a" style="left:412px;top:1035px;" width="30" height="30" viewBox="0 0 30 30"><circle cx="15" cy="15" r="15" fill="#db3a2e"/><path d="M15 15 L2 22.5 A15 15 0 0 0 21 28.7 Z" fill="#1e9a46"/><path d="M15 15 L21 28.7 A15 15 0 0 0 28 7.5 L15 7.5 Z" fill="#f8c418"/><path d="M15 15 L2 22.5 A15 15 0 0 1 2 7.5 L15 7.5 Z" fill="#db3a2e"/><circle cx="15" cy="15" r="7" fill="#fff"/><circle cx="15" cy="15" r="5.6" fill="#1c73e8"/></svg>
<div class="a" style="left:428px;top:1029px;width:20px;height:20px;background:radial-gradient(circle at 40% 40%,#b8b4a8,#6a6a70);border-radius:50%"></div>
<div class="a" style="left:423px;top:1070px;width:9px;height:3px;background:#6b6f78;border-radius:2px"></div>
<svg class="a" style="left:466px;top:1035px;" width="31" height="30" viewBox="0 0 31 30"><circle cx="16" cy="15" r="15" fill="#ff8f6b"/><path d="M16 0 A15 15 0 0 1 31 15 L16 15 Z" fill="#ed6c47"/><path d="M16 15 L31 15 A15 15 0 0 1 16 30 Z" fill="#d35230"/><rect x="0" y="7" width="16" height="16" rx="2" fill="#c43e1c"/><text x="8" y="20" text-anchor="middle" font-family="Liberation Sans" font-weight="bold" font-size="12" fill="#fff">P</text></svg>
<div class="a" style="left:478px;top:1070px;width:9px;height:3px;background:#6b6f78;border-radius:2px"></div>
<svg class="a" style="left:521px;top:1035px;" width="31" height="30" viewBox="0 0 31 30"><rect x="6" y="0" width="25" height="30" rx="2" fill="#41a5ee"/><rect x="6" y="8" width="25" height="8" fill="#2b7cd3"/><rect x="6" y="16" width="25" height="8" fill="#185abd"/><path d="M6 24 L31 24 L31 28 Q31 30 29 30 L8 30 Q6 30 6 28 Z" fill="#103f91"/><rect x="0" y="7" width="16" height="16" rx="2" fill="#185abd"/><text x="8" y="20" text-anchor="middle" font-family="Liberation Sans" font-weight="bold" font-size="11.5" fill="#fff">W</text></svg>
<div class="a" style="left:533px;top:1070px;width:9px;height:3px;background:#6b6f78;border-radius:2px"></div>
<svg class="a" style="left:1472px;top:1046px;" width="15" height="8" viewBox="0 0 15 8"><path d="M1 7 L7.5 1 L14 7" fill="none" stroke="#1e1e1e" stroke-width="1.5"/></svg>
<svg class="a" style="left:1510px;top:1040px;" width="20" height="21" viewBox="0 0 20 21"><path d="M9 0.5 Q13 3 17 3 L17 10 Q17 17 9 20 Q1 17 1 10 L1 3 Q5 3 9 0.5 Z" fill="#2d8fe6"/><path d="M9 0.5 Q13 3 17 3 L17 10 Q17 17 9 20 Z" fill="#60b8f8"/><circle cx="14.5" cy="15.5" r="5" fill="#16a33e"/><path d="M12 15.5 L14 17.5 L17.5 13.5" fill="none" stroke="#fff" stroke-width="1.4"/></svg>
<svg class="a" style="left:1548px;top:1042px;" width="22" height="17" viewBox="0 0 22 17"><path d="M5 15 Q0.8 15 0.8 11 Q0.8 7.5 4.2 7 Q5 1.8 11 1.8 Q16 1.8 17.5 6 Q21.2 6.5 21.2 10.5 Q21.2 15 17 15 Z" fill="#c8ccd4" stroke="#2a2a2a" stroke-width="1.5"/><path d="M2 1 L20 16" stroke="#1e1e1e" stroke-width="1.6"/></svg>
<svg class="a" style="left:1591px;top:1040px;" width="15" height="21" viewBox="0 0 15 21"><rect x="4" y="0.8" width="7" height="12.5" rx="3.5" fill="none" stroke="#1f6fd0" stroke-width="1.7"/><path d="M1 9.5 Q1 16.5 7.5 16.5 Q14 16.5 14 9.5 M7.5 16.5 L7.5 20" fill="none" stroke="#1f6fd0" stroke-width="1.7"/></svg>
<svg class="a" style="left:1628px;top:1041px;" width="22" height="17" viewBox="0 0 22 17"><path d="M1 4 L1 16 L21 16 L21 4 L12 4" fill="none" stroke="#1f6fd0" stroke-width="1.6"/><path d="M5 0 L6 3 L9 4 L6 5 L5 8 L4 5 L1 4 L4 3 Z" fill="#1f6fd0"/><path d="M11 7 L12.5 10 L15.5 11 L12.5 12 L11 15 L9.5 12 L6.5 11 L9.5 10 Z" fill="#1f6fd0"/></svg>
<div class="a" style="left:1660px;top:1026px;width:53px;height:48px;background:#eef2fa;border-radius:5px"></div>
<div class="t" style="left:1674.00px;top:1044.28px;font-size:14.2px;color:#1b1b1b;">УКР</div>
<svg class="a" style="left:1724px;top:1044px;" width="21" height="14" viewBox="0 0 21 14"><path d="M1 5 Q10.5 -3 20 5 M4 8 Q10.5 2 17 8 M7 11 Q10.5 8 14 11" fill="none" stroke="#1e1e1e" stroke-width="1.6"/><circle cx="10.5" cy="13" r="1.3" fill="#1e1e1e"/></svg>
<svg class="a" style="left:1754px;top:1043px;" width="21" height="17" viewBox="0 0 21 17"><path d="M1 6 L5 6 L10 1.5 L10 15.5 L5 11 L1 11 Z" fill="none" stroke="#1e1e1e" stroke-width="1.4"/><path d="M13 5.5 Q15 8.5 13 11.5 M15.5 3.5 Q19 8.5 15.5 13.5 M18 1.5 Q22.5 8.5 18 15.5" fill="none" stroke="#1e1e1e" stroke-width="1.3"/></svg>
<svg class="a" style="left:1784px;top:1044px;" width="21" height="13" viewBox="0 0 21 13"><rect x="0.8" y="0.8" width="17" height="11.4" rx="2" fill="none" stroke="#1e1e1e" stroke-width="1.5"/><rect x="3" y="3" width="10" height="7" fill="#1e1e1e"/><rect x="18.5" y="4" width="2.2" height="5" rx="1" fill="#1e1e1e"/></svg>
<div class="t" style="left:1868.70px;top:1033.35px;font-size:14px;color:#1b1b1b;">8:43</div>
<div class="t" style="left:1825.00px;top:1053.35px;font-size:14px;color:#1b1b1b;">27.02.2026</div></body></html>
